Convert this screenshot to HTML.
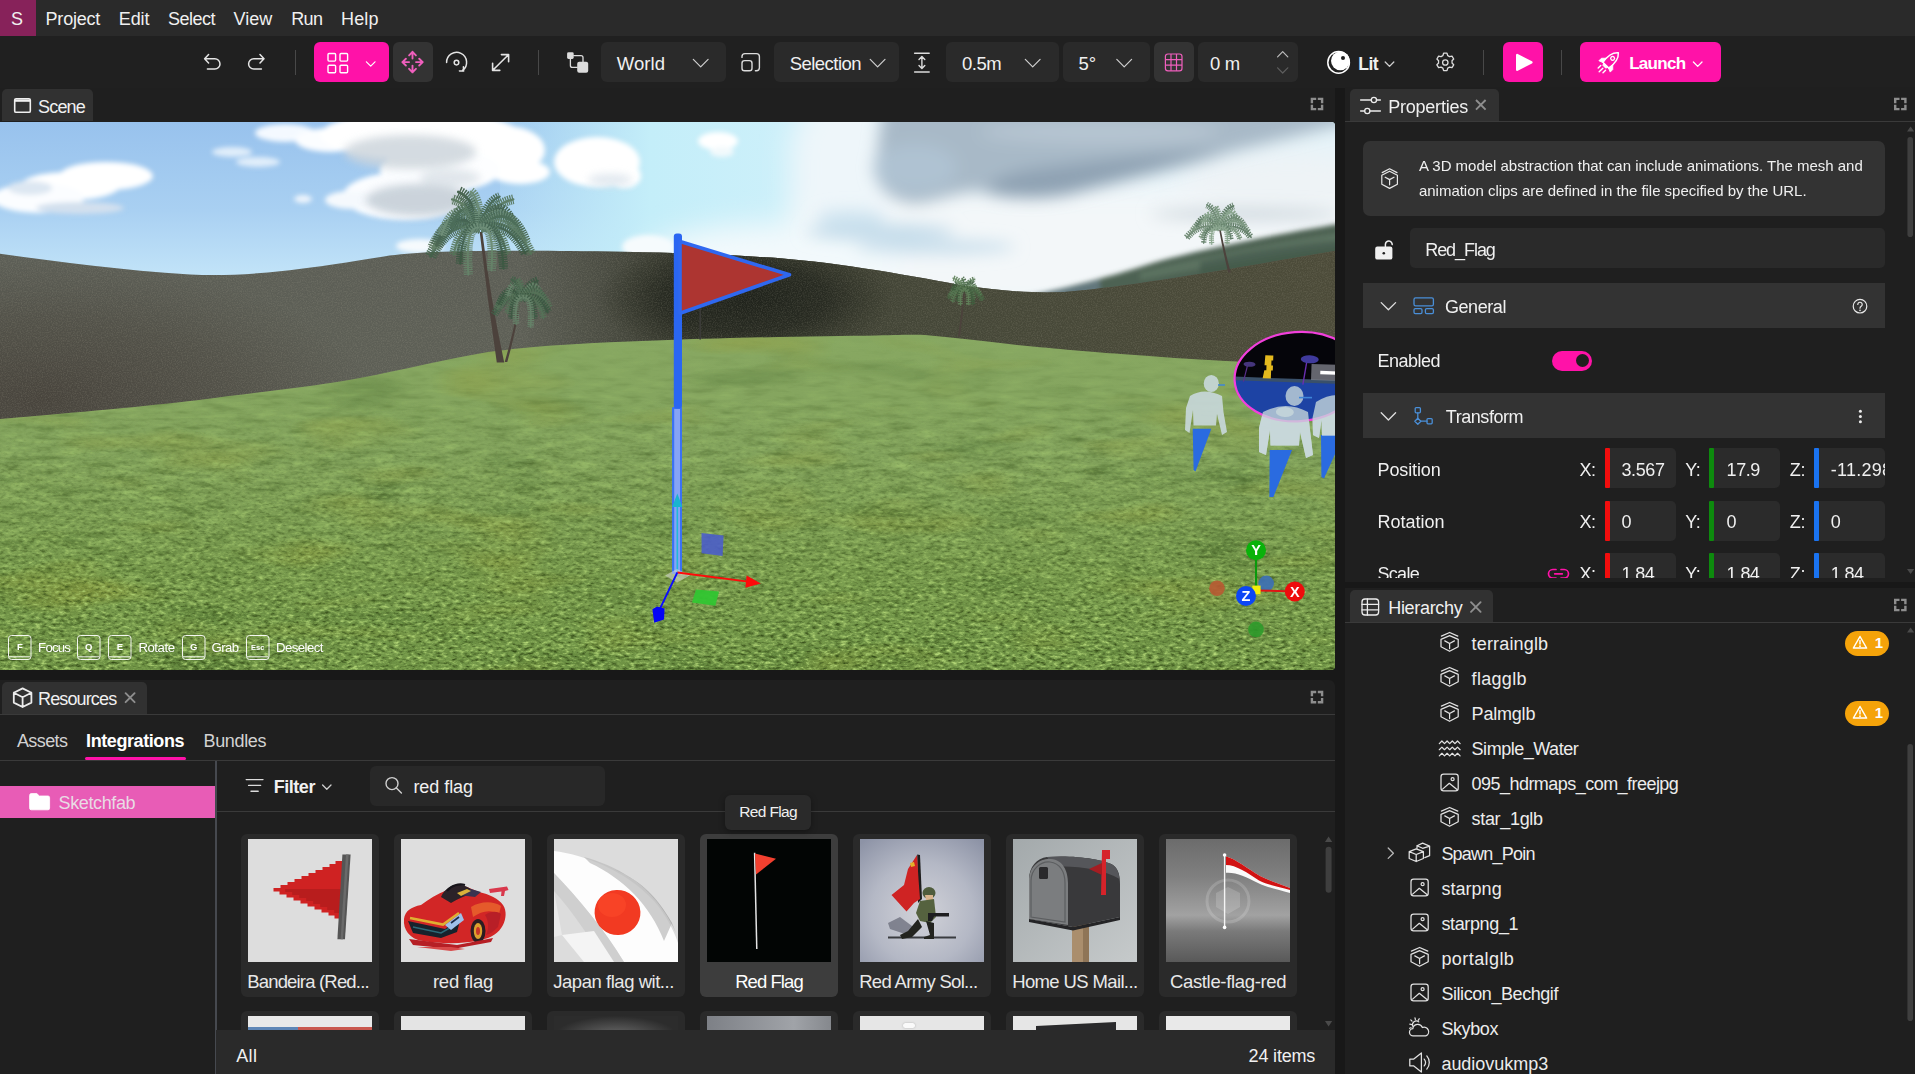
<!DOCTYPE html>
<html lang="en">
<head>
<meta charset="utf-8">
<title>Scene Editor</title>
<style>
*{box-sizing:border-box;margin:0;padding:0}
html,body{width:1915px;height:1074px;overflow:hidden;background:#181818}
body{font-family:"Liberation Sans",sans-serif;font-size:18px;color:#f0f0f0;position:relative}
.abs{position:absolute}
.t{position:absolute;white-space:nowrap;line-height:1;color:#f0f0f0}
svg{position:absolute;overflow:visible}
.ic{fill:none;stroke-linecap:round;stroke-linejoin:round}
.btn{position:absolute;top:42px;height:40px;border-radius:6px;background:#2a2a2a}
.pink{background:#ff12a8}
.sep{position:absolute;top:50px;width:1px;height:25px;background:#484848}
.panel{position:absolute;background:#1f1f1f;overflow:hidden}
.tab{position:absolute;height:33px;background:#313131;border-radius:5px 5px 0 0}
.hline{position:absolute;height:1px;background:#383838}
.vline{position:absolute;width:1px;background:#383838}
.field{position:absolute;height:40px;background:#2b2b2b;border-radius:5px;overflow:hidden}
.hdr{position:absolute;left:1363px;width:522px;height:45px;background:#333333}
.card{position:absolute;width:138px;height:163px;background:#2a2a2a;border-radius:6px;overflow:hidden}
.thumb{position:absolute;left:7px;top:5px;width:124px;height:123px;overflow:hidden}
</style>
</head>
<body>
<!-- ============ MENU BAR ============ -->
<div class="abs" style="left:0;top:0;width:1915px;height:36px;background:#2a2a2a"></div>
<div class="abs" style="left:0;top:0;width:36px;height:36px;background:#87225a"></div>
<div class="t" style="left:11.1px;top:10px;font-size:18px;letter-spacing:-1.00px">S</div>
<div class="t" style="left:45.6px;top:10px;font-size:18px;letter-spacing:-0.23px">Project</div>
<div class="t" style="left:118.7px;top:10px;font-size:18px;letter-spacing:-0.05px">Edit</div>
<div class="t" style="left:168.0px;top:10px;font-size:18px;letter-spacing:-0.52px">Select</div>
<div class="t" style="left:233.6px;top:10px;font-size:18px">View</div>
<div class="t" style="left:291.2px;top:10px;font-size:18px;letter-spacing:-0.57px">Run</div>
<div class="t" style="left:341.1px;top:10px;font-size:18px;letter-spacing:0.10px">Help</div>
<!-- ============ TOOLBAR ============ -->
<div class="abs" style="left:0;top:36px;width:1915px;height:52px;background:#202020"></div>
<!-- undo / redo -->
<svg style="left:0;top:0" width="1915" height="90">
 <g class="ic" stroke="#e4e4e4" stroke-width="1.5">
  <path d="M208.6 54.6 L204.6 58.7 L208.6 62.9 M205 58.7 H214.8 a5.2 5.2 0 0 1 0 10.4 H207.4"/>
  <path d="M260 54.6 L264 58.7 L260 62.9 M263.6 58.7 H253.8 a5.2 5.2 0 0 0 0 10.4 H261.4"/>
 </g>
</svg>
<div class="sep" style="left:295px"></div>
<!-- layout button -->
<div class="btn pink" style="left:314px;width:75px"></div>
<svg style="left:0;top:0" width="1915" height="90">
 <g fill="none" stroke="#fff" stroke-width="1.4" stroke-linejoin="round">
  <rect x="328" y="53.5" width="7.6" height="7.6" rx="1"/><rect x="340" y="53.5" width="7.6" height="7.6" rx="1"/>
  <rect x="328" y="65.2" width="7.6" height="7.6" rx="1"/><rect x="340" y="65.2" width="7.6" height="7.6" rx="1"/>
  <path d="M366.4 61.8 L370.7 66.2 L375 61.8" stroke-width="1.2" stroke-linecap="round"/>
 </g>
</svg>
<!-- move button -->
<div class="btn" style="left:393px;width:40px;background:#333333"></div>
<svg style="left:0;top:0" width="1915" height="90">
 <g fill="none" stroke="#f05fbd" stroke-width="1.9" stroke-linecap="round" stroke-linejoin="round">
  <path d="M412.5 51.8 V58.6 M409.1 55.4 L412.5 51.9 L415.9 55.4"/>
  <path d="M412.5 72.4 V65.6 M409.1 68.8 L412.5 72.3 L415.9 68.8"/>
  <path d="M402.3 62.1 H409.1 M405.9 58.7 L402.4 62.1 L405.9 65.5"/>
  <path d="M422.8 62.1 H416 M419.2 58.7 L422.7 62.1 L419.2 65.5"/>
 </g>
 <!-- rotate -->
 <g class="ic" stroke="#e4e4e4" stroke-width="1.5">
  <path d="M446.6 62.6 A10 10 0 1 1 462.6 70.4"/>
  <path d="M459.4 70.9 L463.6 71.1 M463.4 66.8 L463.6 71.1" stroke-width="1.5"/>
  <path d="M459.2 70.2 L463.2 71.6 L463.6 67" stroke="none"/>
  <circle cx="456.5" cy="62.6" r="2.3"/>
 </g>
 <!-- scale -->
 <g class="ic" stroke="#e4e4e4" stroke-width="1.6">
  <path d="M492.8 70.2 L508.4 54.8 M501.4 54.6 H508.6 V61.8 M492.6 63.2 V70.4 H499.8"/>
 </g>
 <!-- transform space icon -->
 <g fill="#dcdcdc" stroke="none">
  <rect x="567.1" y="52.3" width="6.6" height="6.6" rx="1.4"/>
  <rect x="577.2" y="61.8" width="11" height="11" rx="2"/>
 </g>
 <g class="ic" stroke="#dcdcdc" stroke-width="1.3">
  <path d="M573.7 55.6 H581 a2 2 0 0 1 2 2 V61.8"/>
  <path d="M570.4 58.9 V65.4 a2 2 0 0 0 2 2 H577.2"/>
 </g>
 <!-- pivot icon -->
 <g class="ic" stroke="#dcdcdc" stroke-width="1.4">
  <path d="M742 57.4 V56.6 a3 3 0 0 1 3 -3 H756.4 a3 3 0 0 1 3 3 V67.8 a3 3 0 0 1 -3 3 H755.4"/>
  <rect x="742" y="60.6" width="10" height="10.2" rx="2.6"/>
 </g>
 <!-- height icon -->
 <g class="ic" stroke="#dcdcdc" stroke-width="1.4">
  <path d="M914.6 53.2 H929.2 M914.6 72 H929.2 M921.9 56.8 V68.4 M919 59.6 L921.9 56.6 L924.8 59.6 M919 65.6 L921.9 68.6 L924.8 65.6"/>
 </g>
</svg>
<div class="sep" style="left:538px"></div>
<!-- World dropdown -->
<div class="btn" style="left:601px;width:125px"></div>
<div class="t" style="left:616.7px;top:55px;font-size:18.5px;letter-spacing:0.12px">World</div>
<!-- Selection dropdown -->
<div class="btn" style="left:774px;width:125px"></div>
<div class="t" style="left:789.7px;top:55px;font-size:18.5px;letter-spacing:-0.53px">Selection</div>
<!-- snap dropdowns -->
<div class="btn" style="left:946px;width:113px"></div>
<div class="t" style="left:962.0px;top:55px;font-size:18.5px;letter-spacing:-0.49px">0.5m</div>
<div class="btn" style="left:1063px;width:87px"></div>
<div class="t" style="left:1078.6px;top:55px;font-size:18.5px;letter-spacing:-0.11px">5°</div>
<div class="btn" style="left:1154px;width:40px;background:#333333"></div>
<div class="btn" style="left:1198px;width:100px"></div>
<div class="t" style="left:1209.9px;top:55px;font-size:18.5px;letter-spacing:-0.26px">0 m</div>
<svg style="left:0;top:0" width="1915" height="90">
 <g fill="none" stroke="#f05fbd" stroke-width="1.2" stroke-linejoin="round">
  <rect x="1165.4" y="54" width="16.6" height="16.8" rx="2.6"/>
  <path d="M1171 54 V70.8 M1176.5 54 V70.8 M1165.4 59.6 H1182 M1165.4 65.2 H1182"/>
 </g>
 <g class="ic" stroke="#e4e4e4" stroke-width="1.2">
  <path d="M1277.6 56.8 L1282.7 51.6 L1287.8 56.8" stroke="#bdbdbd"/>
  <path d="M1277.6 67.8 L1282.7 73 L1287.8 67.8" stroke="#5e5e5e"/>
 </g>
 <!-- Lit icon -->
 <circle cx="1338.6" cy="62.4" r="10.8" fill="none" stroke="#fff" stroke-width="1.5"/>
 <circle cx="1340.4" cy="60.8" r="9.4" fill="#fff"/>
 <circle cx="1343" cy="58" r="2" fill="#1f1f1f"/>
 <path class="ic" stroke="#cfcfcf" stroke-width="1.3" d="M1385.2 62 L1389.5 66.4 L1393.8 62"/>
 <!-- gear -->
 <g class="ic" stroke="#dcdcdc" stroke-width="1.3">
  <circle cx="1445.3" cy="62.5" r="2.7"/>
  <path id="gear" d="M1443.6 53.2 h3.4 l0.7 2.4 a6.6 6.6 0 0 1 1.9 1.1 l2.4 -0.6 l1.7 2.9 l-1.7 1.8 a6.6 6.6 0 0 1 0 2.2 l1.7 1.8 l-1.7 2.9 l-2.4 -0.6 a6.6 6.6 0 0 1 -1.9 1.1 l-0.7 2.4 h-3.4 l-0.7 -2.4 a6.6 6.6 0 0 1 -1.9 -1.1 l-2.4 0.6 l-1.7 -2.9 l1.7 -1.8 a6.6 6.6 0 0 1 0 -2.2 l-1.7 -1.8 l1.7 -2.9 l2.4 0.6 a6.6 6.6 0 0 1 1.9 -1.1 z"/>
 </g>
</svg>
<div class="t" style="left:1358.2px;top:56px;font-size:17.5px;letter-spacing:-0.47px;font-weight:700">Lit</div>
<div class="sep" style="left:1483px"></div>
<div class="btn pink" style="left:1503px;width:40px"></div>
<svg style="left:0;top:0" width="1915" height="90">
 <path d="M1517.2 55 V69.8 L1531.4 62.4 Z" fill="#fff" stroke="#fff" stroke-width="2.4" stroke-linejoin="round"/>
</svg>
<div class="sep" style="left:1561px"></div>
<div class="btn pink" style="left:1580px;width:141px"></div>
<div class="t" style="left:1629.2px;top:55px;font-size:17px;letter-spacing:-0.72px;font-weight:700;color:#fff">Launch</div>
<svg style="left:0;top:0" width="1915" height="90">
 <path class="ic" stroke="#fff" stroke-width="1.3" d="M1693.4 62 L1697.7 66.4 L1702 62"/>
 <!-- rocket -->
 <g transform="translate(1609.5 61.5) rotate(45)">
  <path d="M0 -12.5 C4.6 -8.5 5.4 -2 4.2 5.2 H-4.2 C-5.4 -2 -4.6 -8.5 0 -12.5 Z" fill="none" stroke="#fff" stroke-width="1.5" stroke-linejoin="round"/>
  <circle cx="0" cy="-4.4" r="1.9" fill="none" stroke="#fff" stroke-width="1.3"/>
  <path d="M-4.6 0 L-8 3.4 V7 L-4 5.4 Z M4.6 0 L8 3.4 V7 L4 5.4 Z M-3 5.2 H3 L2 7.4 H-2 Z" fill="#fff" stroke="#fff" stroke-width="0.8" stroke-linejoin="round"/>
  <path d="M0 9.4 V14.6 M-3.4 9 V12.6 M3.4 9 V12.6" stroke="#fff" stroke-width="1.4" stroke-linecap="round"/>
 </g>
</svg>
<svg style="left:0;top:0" width="1915" height="90"><g class="ic" stroke="#cfcfcf" stroke-width="1.2">
 <path d="M693.3 59.4 L700.7 66.8 L708.1 59.4"/>
 <path d="M870.2 59.4 L877.6 66.8 L885 59.4"/>
 <path d="M1025.3 59.4 L1032.7 66.8 L1040.1 59.4"/>
 <path d="M1116.8 59.4 L1124.2 66.8 L1131.6 59.4"/>
</g></svg>
<!-- ============ SCENE PANEL ============ -->
<div class="panel" style="left:0;top:88px;width:1335px;height:582px;border-radius:0 0 6px 0"></div>
<div class="tab" style="left:2px;top:89px;width:91px;height:32px"></div>
<svg style="left:0;top:0" width="1335" height="125">
 <g class="ic" stroke="#f0f0f0" stroke-width="1.6"><rect x="14.7" y="98.7" width="15.6" height="13.6" rx="1.4"/><path d="M14.7 100.6 H30.3" stroke-width="2.4" stroke-linecap="butt"/></g>
 <path d="M1311.9 103.2 V98.9 H1316.2 M1317.8 98.9 H1322.1 V103.2 M1322.1 104.8 V109.1 H1317.8 M1316.2 109.1 H1311.9 V104.8" fill="none" stroke="#8e8e8e" stroke-width="2.4"/>
</svg>
<div class="t" style="left:38.0px;top:98px;font-size:18px;letter-spacing:-0.81px">Scene</div>
<div class="abs" id="viewport" style="left:0;top:122px;width:1335px;height:548px;overflow:hidden;border-radius:0 4px 4px 0;background:#6a9648">
<svg style="left:0;top:0" width="1335" height="548" viewBox="0 122 1335 548">
 <defs>
  <linearGradient id="sky" x1="0" y1="122" x2="0" y2="300" gradientUnits="userSpaceOnUse">
   <stop offset="0" stop-color="#98c2ed"/><stop offset="0.5" stop-color="#a9d0f2"/><stop offset="0.85" stop-color="#c1e3f8"/><stop offset="1" stop-color="#c6e6f9"/>
  </linearGradient>
  <linearGradient id="skyR" x1="470" y1="0" x2="900" y2="0" gradientUnits="userSpaceOnUse">
   <stop offset="0" stop-color="#c4eef9" stop-opacity="0"/><stop offset="0.42" stop-color="#c4eef9" stop-opacity="1"/><stop offset="0.75" stop-color="#cdf0fa" stop-opacity="1"/><stop offset="1" stop-color="#e4f3f9" stop-opacity="1"/>
  </linearGradient>
  <linearGradient id="grass" x1="0" y1="335" x2="0" y2="670" gradientUnits="userSpaceOnUse">
   <stop offset="0" stop-color="#88a862"/><stop offset="0.35" stop-color="#82a25c"/><stop offset="0.7" stop-color="#76984c"/><stop offset="1" stop-color="#709446"/>
  </linearGradient>
  <linearGradient id="hillL" x1="0" y1="250" x2="0" y2="420" gradientUnits="userSpaceOnUse">
   <stop offset="0" stop-color="#5c5e56"/><stop offset="0.5" stop-color="#5d5f56"/><stop offset="1" stop-color="#5e5f56"/>
  </linearGradient>
  <linearGradient id="hillR" x1="520" y1="0" x2="1335" y2="0" gradientUnits="userSpaceOnUse">
   <stop offset="0" stop-color="#3a3c30" stop-opacity="0"/><stop offset="0.2" stop-color="#383a2f" stop-opacity="1"/><stop offset="0.5" stop-color="#454738"/><stop offset="1" stop-color="#4c4b39"/>
  </linearGradient>
  <radialGradient id="hdk" cx="40" cy="400" r="330" gradientUnits="userSpaceOnUse" gradientTransform="translate(40 400) scale(1 .42) translate(-40 -400)"><stop offset="0" stop-color="#443f38" stop-opacity=".85"/><stop offset="0.6" stop-color="#47433b" stop-opacity=".45"/><stop offset="1" stop-color="#4a463e" stop-opacity="0"/></radialGradient>
  <radialGradient id="shadow" cx="745" cy="298" r="150" gradientUnits="userSpaceOnUse" gradientTransform="translate(745 298) scale(1 .4) translate(-745 -298)">
   <stop offset="0" stop-color="#1f221b" stop-opacity="1"/><stop offset="0.55" stop-color="#23261e" stop-opacity=".8"/><stop offset="1" stop-color="#2a2d22" stop-opacity="0"/>
  </radialGradient>
  <filter id="b2" x="-20%" y="-20%" width="140%" height="140%"><feGaussianBlur stdDeviation="2"/></filter>
  <filter id="b3" x="-20%" y="-20%" width="140%" height="140%"><feGaussianBlur stdDeviation="2.6"/></filter>
  <filter id="b4" x="-20%" y="-20%" width="140%" height="140%"><feGaussianBlur stdDeviation="4"/></filter>
  <filter id="b8" x="-20%" y="-20%" width="140%" height="140%"><feGaussianBlur stdDeviation="8"/></filter>
  <filter id="b14" x="-30%" y="-30%" width="160%" height="160%"><feGaussianBlur stdDeviation="14"/></filter>
  <filter id="b05" x="-20%" y="-20%" width="140%" height="140%"><feGaussianBlur stdDeviation="0.75"/></filter>
  <filter id="b1" x="-20%" y="-20%" width="140%" height="140%"><feGaussianBlur stdDeviation="0.8"/></filter>
  <filter id="gtex" x="0" y="0" width="100%" height="100%" color-interpolation-filters="sRGB">
   <feTurbulence type="fractalNoise" baseFrequency="0.17 0.34" numOctaves="3" seed="7" result="n"/>
   <feColorMatrix in="n" type="matrix" values="0 0 0 0 0.20  0 0 0 0 0.29  0 0 0 0 0.09  -3.0 0 0 0 1.40" result="d"/>
   <feColorMatrix in="n" type="matrix" values="0 0 0 0 0.72  0 0 0 0 0.86  0 0 0 0 0.48  3.0 0 0 0 -1.58" result="l"/>
   <feMerge><feMergeNode in="d"/><feMergeNode in="l"/></feMerge>
  </filter>
  <filter id="gmid" x="0" y="0" width="100%" height="100%" color-interpolation-filters="sRGB">
   <feTurbulence type="fractalNoise" baseFrequency="0.035 0.16" numOctaves="3" seed="21" result="n"/>
   <feColorMatrix in="n" type="matrix" values="0 0 0 0 0.24  0 0 0 0 0.35  0 0 0 0 0.13  -2.6 0 0 0 1.25" result="d"/>
   <feColorMatrix in="n" type="matrix" values="0 0 0 0 0.70  0 0 0 0 0.85  0 0 0 0 0.48  2.4 0 0 0 -1.28" result="l"/>
   <feMerge><feMergeNode in="d"/><feMergeNode in="l"/></feMerge>
  </filter>
  <filter id="gblot" x="0" y="0" width="100%" height="100%" color-interpolation-filters="sRGB">
   <feTurbulence type="fractalNoise" baseFrequency="0.007 0.028" numOctaves="2" seed="4" result="n"/>
   <feColorMatrix in="n" type="matrix" values="0 0 0 0 0.62  0 0 0 0 0.60  0 0 0 0 0.18  0 3.0 0 0 -1.62" result="y"/>
   <feColorMatrix in="n" type="matrix" values="0 0 0 0 0.16  0 0 0 0 0.30  0 0 0 0 0.10  0 0 -3.0 0 1.25" result="d"/>
   <feMerge><feMergeNode in="d"/><feMergeNode in="y"/></feMerge>
  </filter>
  <linearGradient id="fadeM" x1="0" y1="335" x2="0" y2="670" gradientUnits="userSpaceOnUse"><stop offset="0" stop-color="#fff" stop-opacity=".05"/><stop offset="0.12" stop-color="#fff" stop-opacity=".2"/><stop offset="0.4" stop-color="#fff" stop-opacity=".7"/><stop offset="0.7" stop-color="#fff" stop-opacity=".5"/><stop offset="1" stop-color="#fff" stop-opacity=".2"/></linearGradient>
  <mask id="mM"><rect x="0" y="122" width="1335" height="548" fill="url(#fadeM)"/></mask>
  <filter id="hn" x="0" y="0" width="100%" height="100%">
   <feTurbulence type="fractalNoise" baseFrequency="0.8" numOctaves="2" seed="11" result="n"/>
   <feColorMatrix in="n" type="matrix" values="0 0 0 0 0.46  0 0 0 0 0.44  0 0 0 0 0.34  0 0 1.4 0 -0.55" result="c"/><feComposite in="c" in2="SourceAlpha" operator="in"/>
  </filter>
  <linearGradient id="fadeB" x1="0" y1="400" x2="0" y2="660" gradientUnits="userSpaceOnUse"><stop offset="0" stop-color="#fff" stop-opacity="0"/><stop offset="0.45" stop-color="#fff" stop-opacity=".45"/><stop offset="1" stop-color="#fff" stop-opacity="1"/></linearGradient>
  <mask id="mB"><rect x="0" y="122" width="1335" height="548" fill="url(#fadeB)"/></mask>
 </defs>
 <!-- sky -->
 <rect x="0" y="122" width="1335" height="240" fill="url(#sky)"/>
 <rect x="500" y="122" width="835" height="240" fill="url(#skyR)"/>
 <!-- right-side overcast -->
 <g filter="url(#b14)">
  <rect x="790" y="185" width="620" height="130" fill="#f3f7f9"/>
  <ellipse cx="770" cy="262" rx="130" ry="38" fill="#f2f9fc"/>
  <ellipse cx="845" cy="160" rx="55" ry="70" fill="#eef6fa"/>
  <ellipse cx="1290" cy="180" rx="110" ry="30" fill="#eef3f6"/>
 </g>
 <g filter="url(#b8)">
  <path d="M885 100 H1360 V120 C1320 130 1279 140 1227 153 C1174 168 1096 187 1070 194 C1040 200 1005 199 985 192 C960 188 935 204 913 203 C890 200 870 185 876 160 C880 135 880 120 885 100 Z" fill="#a8b9c7"/>
  <path d="M985 192 C1005 199 1040 200 1070 194 C1096 187 1174 168 1227 153 C1180 150 1100 160 1040 168 C1010 172 990 180 985 192 Z" fill="#8fa2b3"/>
  <ellipse cx="915" cy="168" rx="42" ry="24" fill="#afc2d2"/>
  <ellipse cx="1100" cy="132" rx="120" ry="12" fill="#b6c5d1"/>
  <ellipse cx="1245" cy="214" rx="95" ry="6" fill="#cfd8de"/>
  <ellipse cx="880" cy="232" rx="75" ry="8" fill="#c4dcea"/>
  <ellipse cx="935" cy="247" rx="80" ry="7" fill="#c9dfec"/>
  <ellipse cx="850" cy="218" rx="35" ry="8" fill="#cfe4f0"/>
 </g>
 <!-- left clouds -->
 <g filter="url(#b3)">
  <ellipse cx="106" cy="176" rx="47" ry="14" fill="#fff"/>
  <ellipse cx="70" cy="186" rx="50" ry="14" fill="#fff"/>
  <ellipse cx="38" cy="198" rx="46" ry="15" fill="#fbfdff"/>
  <ellipse cx="80" cy="208" rx="44" ry="6" fill="#d3e0ee"/>
  <ellipse cx="30" cy="188" rx="22" ry="7" fill="#dde7f2"/>
  <ellipse cx="232" cy="152" rx="20" ry="5" fill="#e8f2fc" opacity=".9"/>
  <ellipse cx="258" cy="162" rx="22" ry="5" fill="#e8f2fc" opacity=".9"/>
  <ellipse cx="285" cy="133" rx="30" ry="9" fill="#f4f9ff"/>
  <ellipse cx="330" cy="140" rx="35" ry="12" fill="#fbfdff"/>
  <ellipse cx="420" cy="135" rx="100" ry="24" fill="#fff"/>
  <ellipse cx="505" cy="150" rx="40" ry="24" fill="#fff"/>
  <ellipse cx="520" cy="172" rx="30" ry="12" fill="#fff"/>
  <ellipse cx="440" cy="170" rx="60" ry="22" fill="#fdfeff"/>
  <ellipse cx="405" cy="196" rx="62" ry="24" fill="#fbfdff"/>
  <ellipse cx="350" cy="200" rx="25" ry="9" fill="#f5f9fd"/>
  <ellipse cx="597" cy="162" rx="43" ry="25" fill="#fff"/>
  <ellipse cx="625" cy="176" rx="16" ry="12" fill="#fff"/>
  <ellipse cx="420" cy="246" rx="24" ry="7" fill="#f6fafd"/>
  <ellipse cx="718" cy="141" rx="20" ry="9" fill="#fff"/>
  <ellipse cx="722" cy="152" rx="12" ry="5" fill="#f2f9fc"/>
  <ellipse cx="303" cy="199" rx="9" ry="4" fill="#eef5fc"/>
  <ellipse cx="648" cy="247" rx="26" ry="12" fill="#f6fbfd"/>
 </g>
 <g filter="url(#b4)" opacity=".85">
  <ellipse cx="410" cy="152" rx="66" ry="17" fill="#cdd5dc"/>
  <ellipse cx="418" cy="200" rx="52" ry="16" fill="#c2ccd5"/>
  <ellipse cx="450" cy="178" rx="30" ry="9" fill="#dbe2e8"/>
  <ellipse cx="610" cy="180" rx="22" ry="6" fill="#dbe4ec"/>
 </g>
 <!--CLOUDS-->
 <!-- distant forest -->
 <g filter="url(#b3)">
  <path d="M1015 298 C1050 292 1100 280 1156 262 C1200 250 1260 237 1345 223 V300 H1015 Z" fill="#4d6252"/>
  <path d="M1140 272 C1200 258 1260 245 1345 232 V246 C1280 254 1220 264 1140 280 Z" fill="#687d6b" opacity=".6"/>
  <path d="M1015 298 C1040 293 1070 288 1100 280 L1100 300 H1015 Z" fill="#6b8090" opacity=".7"/>
  <path d="M1200 262 C1250 250 1300 244 1345 240 V262 C1300 264 1250 268 1200 276 Z" fill="#40564a" opacity=".6"/>
 </g>
 <!-- hills -->
 <path d="M-5 253 C60 262 120 270 190 274.5 C250 277 300 270 384 256.5 C420 251 470 250.5 560 251 C620 251.3 700 253 760 257 C830 261 900 274 960 285 C1000 291 1040 294 1070 291.5 C1140 285 1240 267 1340 250 V430 H-5 Z" fill="url(#hillL)"/>
 <path d="M-5 253 C60 262 120 270 190 274.5 C250 277 300 270 384 256.5 C420 251 470 250.5 560 251 C620 251.3 700 253 760 257 C830 261 900 274 960 285 C1000 291 1040 294 1070 291.5 C1140 285 1240 267 1340 250 V430 H-5 Z" fill="url(#hillR)"/>
 <clipPath id="hc"><path d="M-5 253 C60 262 120 270 190 274.5 C250 277 300 270 384 256.5 C420 251 470 250.5 560 251 C620 251.3 700 253 760 257 C830 261 900 274 960 285 C1000 291 1040 294 1070 291.5 C1140 285 1240 267 1340 250 V430 H-5 Z"/></clipPath><rect x="560" y="236" width="380" height="124" fill="url(#shadow)" clip-path="url(#hc)"/>
 <rect x="0" y="250" width="420" height="180" fill="url(#hdk)" clip-path="url(#hc)"/>
 <path d="M-5 253 C60 262 120 270 190 274.5 C250 277 300 270 384 256.5 C420 251 470 250.5 560 251 C620 251.3 700 253 760 257 C830 261 900 274 960 285 C1000 291 1040 294 1070 291.5 C1140 285 1240 267 1340 250 V430 H-5 Z" filter="url(#hn)" opacity=".28"/>
 <!--HILLS-->
 <!-- grass -->
 <clipPath id="gc"><path d="M-5 419.5 C80 412 140 407 199 400 C260 392 300 388 349 380 C400 371 440 360 488 352 C550 344 610 342 668 340 C760 337 830 336 877 335.5 C900 335 915 334.6 925 335 C960 338 990 342 1017 345 C1060 349 1090 352 1121 354 C1160 357 1190 359 1226 361 L1340 366 V675 H-5 Z"/></clipPath>
 <path id="gr" d="M-5 419.5 C80 412 140 407 199 400 C260 392 300 388 349 380 C400 371 440 360 488 352 C550 344 610 342 668 340 C760 337 830 336 877 335.5 C900 335 915 334.6 925 335 C960 338 990 342 1017 345 C1060 349 1090 352 1121 354 C1160 357 1190 359 1226 361 L1340 366 V675 H-5 Z" fill="url(#grass)"/>
 <g clip-path="url(#gc)">
  <rect x="0" y="330" width="1335" height="340" filter="url(#gblot)" opacity=".3"/>
  <g mask="url(#mM)"><rect x="0" y="330" width="1335" height="340" filter="url(#gmid)" opacity=".75"/></g>
  <g mask="url(#mB)"><rect x="0" y="400" width="1335" height="270" filter="url(#gtex)"/></g>
 </g>
 <!--GRASS-->
 <!-- palms -->
 <g><path d="M479.7 232.0 Q487.1 297.2 496.8 362.5 H504.2 Q490.2 297.2 482.3 232.0 Z" fill="#4c423c"/>
  <g fill="none" stroke-linecap="round" opacity="0.9" filter="url(#b05)"><path d="M480.5 228.0 Q449.6 219.0 430.6 256.4" stroke="#42624a" stroke-width="12.0" stroke-dasharray="1.3 0.9" stroke-linecap="butt"/><path d="M480.5 228.0 Q449.6 219.0 430.6 256.4" stroke="#42624a" stroke-width="2.8"/><path d="M480.5 228.0 Q451.1 207.6 433.1 248.6" stroke="#557459" stroke-width="12.5" stroke-dasharray="1.3 0.9" stroke-linecap="butt"/><path d="M480.5 228.0 Q451.1 207.6 433.1 248.6" stroke="#557459" stroke-width="3.0"/><path d="M480.5 228.0 Q453.3 205.7 436.6 245.3" stroke="#3a5942" stroke-width="12.5" stroke-dasharray="1.3 0.9" stroke-linecap="butt"/><path d="M480.5 228.0 Q453.3 205.7 436.6 245.3" stroke="#3a5942" stroke-width="3.0"/><path d="M480.5 228.0 Q456.4 192.0 441.6 235.0" stroke="#66856b" stroke-width="9.4" stroke-dasharray="1.3 0.9" stroke-linecap="butt"/><path d="M480.5 228.0 Q456.4 192.0 441.6 235.0" stroke="#66856b" stroke-width="2.2"/><path d="M480.5 228.0 Q463.0 190.8 452.2 227.6" stroke="#42624a" stroke-width="11.0" stroke-dasharray="1.3 0.9" stroke-linecap="butt"/><path d="M480.5 228.0 Q463.0 190.8 452.2 227.6" stroke="#42624a" stroke-width="2.6"/><path d="M480.5 228.0 Q470.8 203.9 452.1 199.3" stroke="#557459" stroke-width="9.8" stroke-dasharray="1.3 0.9" stroke-linecap="butt"/><path d="M480.5 228.0 Q470.8 203.9 452.1 199.3" stroke="#557459" stroke-width="2.3"/><path d="M480.5 228.0 Q473.5 197.7 458.3 192.0" stroke="#3a5942" stroke-width="11.9" stroke-dasharray="1.3 0.9" stroke-linecap="butt"/><path d="M480.5 228.0 Q473.5 197.7 458.3 192.0" stroke="#3a5942" stroke-width="2.8"/><path d="M480.5 228.0 Q479.0 197.3 470.9 191.6" stroke="#66856b" stroke-width="9.5" stroke-dasharray="1.3 0.9" stroke-linecap="butt"/><path d="M480.5 228.0 Q479.0 197.3 470.9 191.6" stroke="#66856b" stroke-width="2.3"/><path d="M480.5 228.0 Q486.1 201.6 499.7 196.7" stroke="#42624a" stroke-width="9.0" stroke-dasharray="1.3 0.9" stroke-linecap="butt"/><path d="M480.5 228.0 Q486.1 201.6 499.7 196.7" stroke="#42624a" stroke-width="2.1"/><path d="M480.5 228.0 Q492.1 203.8 513.3 199.3" stroke="#557459" stroke-width="9.8" stroke-dasharray="1.3 0.9" stroke-linecap="butt"/><path d="M480.5 228.0 Q492.1 203.8 513.3 199.3" stroke="#557459" stroke-width="2.3"/><path d="M480.5 228.0 Q501.8 188.4 514.9 230.4" stroke="#3a5942" stroke-width="10.1" stroke-dasharray="1.3 0.9" stroke-linecap="butt"/><path d="M480.5 228.0 Q501.8 188.4 514.9 230.4" stroke="#3a5942" stroke-width="2.4"/><path d="M480.5 228.0 Q504.9 197.4 519.9 238.1" stroke="#66856b" stroke-width="11.5" stroke-dasharray="1.3 0.9" stroke-linecap="butt"/><path d="M480.5 228.0 Q504.9 197.4 519.9 238.1" stroke="#66856b" stroke-width="2.7"/><path d="M480.5 228.0 Q508.4 198.9 525.5 242.5" stroke="#42624a" stroke-width="11.6" stroke-dasharray="1.3 0.9" stroke-linecap="butt"/><path d="M480.5 228.0 Q508.4 198.9 525.5 242.5" stroke="#42624a" stroke-width="2.7"/><path d="M480.5 228.0 Q511.8 213.3 531.0 253.7" stroke="#557459" stroke-width="10.1" stroke-dasharray="1.3 0.9" stroke-linecap="butt"/><path d="M480.5 228.0 Q511.8 213.3 531.0 253.7" stroke="#557459" stroke-width="2.4"/><path d="M480.5 228.0 Q508.3 219.8 525.4 253.5" stroke="#3a5942" stroke-width="9.5" stroke-dasharray="1.3 0.9" stroke-linecap="butt"/><path d="M480.5 228.0 Q508.3 219.8 525.4 253.5" stroke="#3a5942" stroke-width="2.3"/><path d="M480.5 228.0 Q459.2 223.7 453.6 254.9" stroke="#557459" stroke-width="9.1" stroke-dasharray="1.3 0.9" stroke-linecap="butt"/><path d="M480.5 228.0 Q459.2 223.7 453.6 254.9" stroke="#557459" stroke-width="2.1"/><path d="M480.5 228.0 Q461.9 223.3 460.3 263.7" stroke="#3a5942" stroke-width="9.1" stroke-dasharray="1.3 0.9" stroke-linecap="butt"/><path d="M480.5 228.0 Q461.9 223.3 460.3 263.7" stroke="#3a5942" stroke-width="2.1"/><path d="M480.5 228.0 Q465.0 222.8 468.4 274.6" stroke="#66856b" stroke-width="9.1" stroke-dasharray="1.3 0.9" stroke-linecap="butt"/><path d="M480.5 228.0 Q465.0 222.8 468.4 274.6" stroke="#66856b" stroke-width="2.1"/><path d="M480.5 228.0 Q501.2 223.9 506.8 254.3" stroke="#557459" stroke-width="9.1" stroke-dasharray="1.3 0.9" stroke-linecap="butt"/><path d="M480.5 228.0 Q501.2 223.9 506.8 254.3" stroke="#557459" stroke-width="2.1"/><path d="M480.5 228.0 Q501.7 222.7 503.5 268.7" stroke="#3a5942" stroke-width="9.1" stroke-dasharray="1.3 0.9" stroke-linecap="butt"/><path d="M480.5 228.0 Q501.7 222.7 503.5 268.7" stroke="#3a5942" stroke-width="2.1"/><path d="M480.5 228.0 Q494.7 223.3 491.5 270.5" stroke="#66856b" stroke-width="9.1" stroke-dasharray="1.3 0.9" stroke-linecap="butt"/><path d="M480.5 228.0 Q494.7 223.3 491.5 270.5" stroke="#66856b" stroke-width="2.1"/></g></g>
 <g><path d="M519.2 300.0 Q513.9 331.0 504.7 362.0 H507.3 Q516.0 331.0 520.8 300.0 Z" fill="#4c423c"/>
  <g fill="none" stroke-linecap="round" opacity="0.9" filter="url(#b05)"><path d="M523.0 298.0 Q505.3 293.1 494.4 314.4" stroke="#42624a" stroke-width="7.7" stroke-dasharray="1.3 0.9" stroke-linecap="butt"/><path d="M523.0 298.0 Q505.3 293.1 494.4 314.4" stroke="#42624a" stroke-width="1.8"/><path d="M523.0 298.0 Q507.3 286.6 497.6 308.8" stroke="#557459" stroke-width="8.3" stroke-dasharray="1.3 0.9" stroke-linecap="butt"/><path d="M523.0 298.0 Q507.3 286.6 497.6 308.8" stroke="#557459" stroke-width="2.0"/><path d="M523.0 298.0 Q508.0 279.7 498.7 304.5" stroke="#3a5942" stroke-width="6.5" stroke-dasharray="1.3 0.9" stroke-linecap="butt"/><path d="M523.0 298.0 Q508.0 279.7 498.7 304.5" stroke="#3a5942" stroke-width="1.5"/><path d="M523.0 298.0 Q513.5 273.1 507.7 295.5" stroke="#66856b" stroke-width="6.5" stroke-dasharray="1.3 0.9" stroke-linecap="butt"/><path d="M523.0 298.0 Q513.5 273.1 507.7 295.5" stroke="#66856b" stroke-width="1.5"/><path d="M523.0 298.0 Q519.4 282.4 511.3 279.5" stroke="#42624a" stroke-width="8.0" stroke-dasharray="1.3 0.9" stroke-linecap="butt"/><path d="M523.0 298.0 Q519.4 282.4 511.3 279.5" stroke="#42624a" stroke-width="1.9"/><path d="M523.0 298.0 Q522.0 282.9 517.1 280.1" stroke="#557459" stroke-width="6.9" stroke-dasharray="1.3 0.9" stroke-linecap="butt"/><path d="M523.0 298.0 Q522.0 282.9 517.1 280.1" stroke="#557459" stroke-width="1.6"/><path d="M523.0 298.0 Q528.0 283.5 537.9 280.8" stroke="#3a5942" stroke-width="8.5" stroke-dasharray="1.3 0.9" stroke-linecap="butt"/><path d="M523.0 298.0 Q528.0 283.5 537.9 280.8" stroke="#3a5942" stroke-width="2.0"/><path d="M523.0 298.0 Q534.2 274.2 541.2 297.8" stroke="#66856b" stroke-width="7.3" stroke-dasharray="1.3 0.9" stroke-linecap="butt"/><path d="M523.0 298.0 Q534.2 274.2 541.2 297.8" stroke="#66856b" stroke-width="1.7"/><path d="M523.0 298.0 Q536.0 279.3 543.9 302.1" stroke="#42624a" stroke-width="8.5" stroke-dasharray="1.3 0.9" stroke-linecap="butt"/><path d="M523.0 298.0 Q536.0 279.3 543.9 302.1" stroke="#42624a" stroke-width="2.0"/><path d="M523.0 298.0 Q538.9 283.9 548.7 307.6" stroke="#557459" stroke-width="8.6" stroke-dasharray="1.3 0.9" stroke-linecap="butt"/><path d="M523.0 298.0 Q538.9 283.9 548.7 307.6" stroke="#557459" stroke-width="2.0"/><path d="M523.0 298.0 Q538.3 294.3 547.7 312.5" stroke="#3a5942" stroke-width="9.0" stroke-dasharray="1.3 0.9" stroke-linecap="butt"/><path d="M523.0 298.0 Q538.3 294.3 547.7 312.5" stroke="#3a5942" stroke-width="2.1"/><path d="M523.0 298.0 Q510.9 295.6 507.6 313.4" stroke="#557459" stroke-width="6.5" stroke-dasharray="1.3 0.9" stroke-linecap="butt"/><path d="M523.0 298.0 Q510.9 295.6 507.6 313.4" stroke="#557459" stroke-width="1.5"/><path d="M523.0 298.0 Q512.3 295.3 511.4 318.5" stroke="#3a5942" stroke-width="6.5" stroke-dasharray="1.3 0.9" stroke-linecap="butt"/><path d="M523.0 298.0 Q512.3 295.3 511.4 318.5" stroke="#3a5942" stroke-width="1.5"/><path d="M523.0 298.0 Q514.2 295.1 516.2 324.4" stroke="#66856b" stroke-width="6.5" stroke-dasharray="1.3 0.9" stroke-linecap="butt"/><path d="M523.0 298.0 Q514.2 295.1 516.2 324.4" stroke="#66856b" stroke-width="1.5"/><path d="M523.0 298.0 Q539.2 294.8 543.5 318.5" stroke="#557459" stroke-width="6.5" stroke-dasharray="1.3 0.9" stroke-linecap="butt"/><path d="M523.0 298.0 Q539.2 294.8 543.5 318.5" stroke="#557459" stroke-width="1.5"/><path d="M523.0 298.0 Q533.7 295.3 534.6 318.5" stroke="#3a5942" stroke-width="6.5" stroke-dasharray="1.3 0.9" stroke-linecap="butt"/><path d="M523.0 298.0 Q533.7 295.3 534.6 318.5" stroke="#3a5942" stroke-width="1.5"/><path d="M523.0 298.0 Q532.7 294.8 530.6 327.2" stroke="#66856b" stroke-width="6.5" stroke-dasharray="1.3 0.9" stroke-linecap="butt"/><path d="M523.0 298.0 Q532.7 294.8 530.6 327.2" stroke="#66856b" stroke-width="1.5"/></g></g>
 <g><path d="M963.4 292.0 Q961.5 314.2 958.0 336.5 H960.0 Q963.2 314.2 964.6 292.0 Z" fill="#4c423c"/>
  <g fill="none" stroke-linecap="round" opacity="0.9" filter="url(#b05)"><path d="M964.5 290.0 Q954.6 286.3 948.5 298.6" stroke="#4a6b47" stroke-width="5.2" stroke-dasharray="1.3 0.9" stroke-linecap="butt"/><path d="M964.5 290.0 Q954.6 286.3 948.5 298.6" stroke="#4a6b47" stroke-width="1.2"/><path d="M964.5 290.0 Q955.8 282.5 950.4 295.4" stroke="#587a54" stroke-width="4.9" stroke-dasharray="1.3 0.9" stroke-linecap="butt"/><path d="M964.5 290.0 Q955.8 282.5 950.4 295.4" stroke="#587a54" stroke-width="1.2"/><path d="M964.5 290.0 Q957.2 275.6 952.7 290.4" stroke="#40603f" stroke-width="4.9" stroke-dasharray="1.3 0.9" stroke-linecap="butt"/><path d="M964.5 290.0 Q957.2 275.6 952.7 290.4" stroke="#40603f" stroke-width="1.2"/><path d="M964.5 290.0 Q960.4 280.0 952.9 278.1" stroke="#62845c" stroke-width="5.7" stroke-dasharray="1.3 0.9" stroke-linecap="butt"/><path d="M964.5 290.0 Q960.4 280.0 952.9 278.1" stroke="#62845c" stroke-width="1.3"/><path d="M964.5 290.0 Q964.4 280.3 962.0 278.5" stroke="#4a6b47" stroke-width="5.8" stroke-dasharray="1.3 0.9" stroke-linecap="butt"/><path d="M964.5 290.0 Q964.4 280.3 962.0 278.5" stroke="#4a6b47" stroke-width="1.4"/><path d="M964.5 290.0 Q968.1 280.8 974.9 279.1" stroke="#587a54" stroke-width="5.4" stroke-dasharray="1.3 0.9" stroke-linecap="butt"/><path d="M964.5 290.0 Q968.1 280.8 974.9 279.1" stroke="#587a54" stroke-width="1.3"/><path d="M964.5 290.0 Q971.3 275.4 975.6 289.8" stroke="#40603f" stroke-width="4.7" stroke-dasharray="1.3 0.9" stroke-linecap="butt"/><path d="M964.5 290.0 Q971.3 275.4 975.6 289.8" stroke="#40603f" stroke-width="1.1"/><path d="M964.5 290.0 Q974.3 280.7 980.3 295.5" stroke="#62845c" stroke-width="4.9" stroke-dasharray="1.3 0.9" stroke-linecap="butt"/><path d="M964.5 290.0 Q974.3 280.7 980.3 295.5" stroke="#62845c" stroke-width="1.2"/><path d="M964.5 290.0 Q975.6 286.5 982.5 300.1" stroke="#4a6b47" stroke-width="5.8" stroke-dasharray="1.3 0.9" stroke-linecap="butt"/><path d="M964.5 290.0 Q975.6 286.5 982.5 300.1" stroke="#4a6b47" stroke-width="1.4"/><path d="M964.5 290.0 Q954.9 288.1 952.4 302.1" stroke="#587a54" stroke-width="4.7" stroke-dasharray="1.3 0.9" stroke-linecap="butt"/><path d="M964.5 290.0 Q954.9 288.1 952.4 302.1" stroke="#587a54" stroke-width="1.1"/><path d="M964.5 290.0 Q958.5 288.5 958.0 301.5" stroke="#40603f" stroke-width="4.7" stroke-dasharray="1.3 0.9" stroke-linecap="butt"/><path d="M964.5 290.0 Q958.5 288.5 958.0 301.5" stroke="#40603f" stroke-width="1.1"/><path d="M964.5 290.0 Q959.4 288.3 960.5 305.3" stroke="#62845c" stroke-width="4.7" stroke-dasharray="1.3 0.9" stroke-linecap="butt"/><path d="M964.5 290.0 Q959.4 288.3 960.5 305.3" stroke="#62845c" stroke-width="1.1"/><path d="M964.5 290.0 Q972.1 288.5 974.2 299.7" stroke="#587a54" stroke-width="4.7" stroke-dasharray="1.3 0.9" stroke-linecap="butt"/><path d="M964.5 290.0 Q972.1 288.5 974.2 299.7" stroke="#587a54" stroke-width="1.1"/><path d="M964.5 290.0 Q972.3 288.1 972.9 304.9" stroke="#40603f" stroke-width="4.7" stroke-dasharray="1.3 0.9" stroke-linecap="butt"/><path d="M964.5 290.0 Q972.3 288.1 972.9 304.9" stroke="#40603f" stroke-width="1.1"/><path d="M964.5 290.0 Q969.4 288.4 968.3 304.6" stroke="#62845c" stroke-width="4.7" stroke-dasharray="1.3 0.9" stroke-linecap="butt"/><path d="M964.5 290.0 Q969.4 288.4 968.3 304.6" stroke="#62845c" stroke-width="1.1"/></g></g>
 <g><path d="M1219.2 230.0 Q1222.9 251.2 1228.2 272.5 H1230.8 Q1224.9 251.2 1220.8 230.0 Z" fill="#4c423c"/>
  <g fill="none" stroke-linecap="round" opacity="0.85" filter="url(#b05)"><path d="M1219.5 228.0 Q1199.2 221.7 1186.7 237.8" stroke="#5b7a60" stroke-width="7.0" stroke-dasharray="1.3 0.9" stroke-linecap="butt"/><path d="M1219.5 228.0 Q1199.2 221.7 1186.7 237.8" stroke="#5b7a60" stroke-width="1.7"/><path d="M1219.5 228.0 Q1202.8 212.8 1192.5 230.7" stroke="#6d8c70" stroke-width="6.2" stroke-dasharray="1.3 0.9" stroke-linecap="butt"/><path d="M1219.5 228.0 Q1202.8 212.8 1192.5 230.7" stroke="#6d8c70" stroke-width="1.5"/><path d="M1219.5 228.0 Q1205.3 207.1 1196.6 226.2" stroke="#4d6d53" stroke-width="5.8" stroke-dasharray="1.3 0.9" stroke-linecap="butt"/><path d="M1219.5 228.0 Q1205.3 207.1 1196.6 226.2" stroke="#4d6d53" stroke-width="1.4"/><path d="M1219.5 228.0 Q1209.4 204.3 1203.1 222.4" stroke="#7b9a7e" stroke-width="5.9" stroke-dasharray="1.3 0.9" stroke-linecap="butt"/><path d="M1219.5 228.0 Q1209.4 204.3 1203.1 222.4" stroke="#7b9a7e" stroke-width="1.4"/><path d="M1219.5 228.0 Q1215.6 208.6 1206.7 204.9" stroke="#5b7a60" stroke-width="6.5" stroke-dasharray="1.3 0.9" stroke-linecap="butt"/><path d="M1219.5 228.0 Q1215.6 208.6 1206.7 204.9" stroke="#5b7a60" stroke-width="1.5"/><path d="M1219.5 228.0 Q1219.5 210.2 1215.5 206.8" stroke="#6d8c70" stroke-width="5.3" stroke-dasharray="1.3 0.9" stroke-linecap="butt"/><path d="M1219.5 228.0 Q1219.5 210.2 1215.5 206.8" stroke="#6d8c70" stroke-width="1.3"/><path d="M1219.5 228.0 Q1223.9 209.4 1233.6 205.9" stroke="#4d6d53" stroke-width="7.0" stroke-dasharray="1.3 0.9" stroke-linecap="butt"/><path d="M1219.5 228.0 Q1223.9 209.4 1233.6 205.9" stroke="#4d6d53" stroke-width="1.7"/><path d="M1219.5 228.0 Q1230.3 200.7 1236.9 221.0" stroke="#7b9a7e" stroke-width="6.8" stroke-dasharray="1.3 0.9" stroke-linecap="butt"/><path d="M1219.5 228.0 Q1230.3 200.7 1236.9 221.0" stroke="#7b9a7e" stroke-width="1.6"/><path d="M1219.5 228.0 Q1235.0 207.8 1244.5 227.3" stroke="#5b7a60" stroke-width="6.8" stroke-dasharray="1.3 0.9" stroke-linecap="butt"/><path d="M1219.5 228.0 Q1235.0 207.8 1244.5 227.3" stroke="#5b7a60" stroke-width="1.6"/><path d="M1219.5 228.0 Q1237.4 213.4 1248.5 231.8" stroke="#6d8c70" stroke-width="5.7" stroke-dasharray="1.3 0.9" stroke-linecap="butt"/><path d="M1219.5 228.0 Q1237.4 213.4 1248.5 231.8" stroke="#6d8c70" stroke-width="1.4"/><path d="M1219.5 228.0 Q1239.0 221.7 1251.1 237.3" stroke="#4d6d53" stroke-width="6.6" stroke-dasharray="1.3 0.9" stroke-linecap="butt"/><path d="M1219.5 228.0 Q1239.0 221.7 1251.1 237.3" stroke="#4d6d53" stroke-width="1.6"/><path d="M1219.5 228.0 Q1204.9 225.1 1200.9 238.2" stroke="#6d8c70" stroke-width="5.2" stroke-dasharray="1.3 0.9" stroke-linecap="butt"/><path d="M1219.5 228.0 Q1204.9 225.1 1200.9 238.2" stroke="#6d8c70" stroke-width="1.2"/><path d="M1219.5 228.0 Q1204.9 224.4 1203.7 243.3" stroke="#4d6d53" stroke-width="5.2" stroke-dasharray="1.3 0.9" stroke-linecap="butt"/><path d="M1219.5 228.0 Q1204.9 224.4 1203.7 243.3" stroke="#4d6d53" stroke-width="1.2"/><path d="M1219.5 228.0 Q1209.6 224.7 1211.8 244.4" stroke="#7b9a7e" stroke-width="5.2" stroke-dasharray="1.3 0.9" stroke-linecap="butt"/><path d="M1219.5 228.0 Q1209.6 224.7 1211.8 244.4" stroke="#7b9a7e" stroke-width="1.2"/><path d="M1219.5 228.0 Q1235.7 224.8 1240.0 239.3" stroke="#6d8c70" stroke-width="5.2" stroke-dasharray="1.3 0.9" stroke-linecap="butt"/><path d="M1219.5 228.0 Q1235.7 224.8 1240.0 239.3" stroke="#6d8c70" stroke-width="1.2"/><path d="M1219.5 228.0 Q1230.0 225.4 1230.9 239.1" stroke="#4d6d53" stroke-width="5.2" stroke-dasharray="1.3 0.9" stroke-linecap="butt"/><path d="M1219.5 228.0 Q1230.0 225.4 1230.9 239.1" stroke="#4d6d53" stroke-width="1.2"/><path d="M1219.5 228.0 Q1229.1 224.8 1227.0 243.9" stroke="#7b9a7e" stroke-width="5.2" stroke-dasharray="1.3 0.9" stroke-linecap="butt"/><path d="M1219.5 228.0 Q1229.1 224.8 1227.0 243.9" stroke="#7b9a7e" stroke-width="1.2"/></g></g>
 <!-- small far pole -->
 <path d="M700.2 308.5 V339.5" stroke="#3b3b38" stroke-width="1.6"/>
 <!-- flag pole (selected, blue outline) -->
 <g>
  <rect x="672" y="407" width="10" height="167" rx="1" fill="#3b72f4"/>
  <rect x="674.2" y="409" width="5.8" height="163" fill="#86a4f6"/>
  <rect x="673.8" y="233.5" width="8.2" height="175" rx="3" fill="#2a66f2"/>
  <rect x="679" y="243" width="1.3" height="24" fill="#c9d3e6"/>
  <path d="M680 241.5 L789.5 274.8 L680 313.2 Z" fill="#ad3531" stroke="#2f68f0" stroke-width="3.6" stroke-linejoin="round"/>
  <path d="M677.3 572 V500" stroke="#22b8d8" stroke-width="1.6"/>
  <path d="M677.3 493.5 L672.2 507 H682.4 Z" fill="#19b4cf"/>
 </g>
 <!-- transform gizmo -->
 <path d="M665 575.5 L677 569 L690 575.5 L677 582.5 Z" fill="#d9d9d9" opacity=".55"/>
 <path d="M677.3 572.5 L748 581.6" stroke="#ff0a0a" stroke-width="1.8"/>
 <path d="M760.8 583.6 L746.6 575.6 L745.4 587.8 Z" fill="#ff0a0a"/>
 <path d="M677.3 572.5 L659.6 609.5" stroke="#0a0aff" stroke-width="1.8"/>
 <path d="M652.4 609.2 L657 606.6 L664.6 608.6 L664 619.4 L654.2 622.8 Z" fill="#0404f6"/>
 <path d="M701.5 533 L723.6 535.6 L722.6 556 L701.6 553.2 Z" fill="#4a5ccc" opacity=".88"/>
 <path d="M696 589.5 L719 591.5 L715.4 605.8 L692 602.6 Z" fill="#32c632" opacity=".95"/>
 <!-- avatars -->
 <g>
  <path d="M1192.7 428.8 H1211.3 L1195.5 471.5 L1193.6 470 Z" fill="#2a6be0"/>
  <path d="M1269.7 450 H1292 L1273.4 497 H1269.4 Z" fill="#2a6be0"/>
  <path d="M1321 435 H1336 V452 L1324 478.6 L1321.4 477 Z" fill="#2a6be0"/>
  <g fill="#c9d9dc" opacity=".9">
   <ellipse cx="1211.3" cy="383.5" rx="7.6" ry="8.6"/>
   <path d="M1190 396 Q1204 387 1222 396 L1223.5 412 L1227 432 L1222 435 L1217 414 L1216 425.5 H1193.5 L1193 410 L1189.5 433 L1185 430 L1186 408 Z"/>
   <ellipse cx="1294.5" cy="396" rx="9" ry="10"/>
   <path d="M1263 412 Q1286 400 1308 412 L1310 430 L1313 455 L1306 458 L1300 432 L1299 445.6 H1270.5 L1270 430 L1266 455 L1259 452 L1259 428 Z"/>
   <path d="M1316 402 Q1328 394 1340 395 V435.5 H1322 L1321.5 420 L1319 438 L1313 435 L1312.5 418 Z"/>
  </g>
  <path d="M1218 385 H1225 M1299 397.6 H1312" stroke="#3f86d8" stroke-width="1.6"/>
 </g>
 <!-- portal -->
 <clipPath id="pc"><ellipse cx="1298" cy="376.6" rx="63.5" ry="44.6" transform="rotate(-4 1298 376.6)"/></clipPath>
 <g clip-path="url(#pc)"><g transform="rotate(2 1285 380)">
   <rect x="1220" y="320" width="150" height="62" fill="#05050a"/>
   <rect x="1220" y="381" width="150" height="60" fill="#1d43a4"/>
   <rect x="1220" y="378.4" width="150" height="3.6" fill="#39506a"/>
   <path d="M1264.5 356 H1272.5 V361 H1270.8 V366 H1272.5 V371 H1270.8 V379 H1262.6 L1264 371 H1266 V366 H1264 Z" fill="#e4b91e"/>
   <path d="M1247 367 L1243.5 383" stroke="#5a2f8c" stroke-width="1.2"/><ellipse cx="1249" cy="365.5" rx="6" ry="2.6" fill="#45357c"/>
   <path d="M1306 362 L1303 384" stroke="#6a2fb0" stroke-width="1.4"/><ellipse cx="1309" cy="358.5" rx="9" ry="4" fill="#3f3a9c"/>
   <rect x="1311" y="363" width="34" height="16" fill="#8d8f98" opacity=".7"/>
   <rect x="1320" y="369.6" width="24" height="3.4" fill="#fff"/>
   <ellipse cx="1286" cy="412" rx="9" ry="5" fill="#c9d9dc" opacity=".8"/>
 </g></g>
 <ellipse cx="1298" cy="376.6" rx="63.5" ry="44.6" fill="none" stroke="#f23fdc" stroke-width="2.2" transform="rotate(-4 1298 376.6)"/>
 <!-- redraw avatar 2 torso over portal, translucent -->
 <g fill="#c9d9dc" opacity=".78">
  <ellipse cx="1294.5" cy="396" rx="9" ry="10"/>
  <path d="M1263 412 Q1286 400 1308 412 L1310 430 L1313 455 L1306 458 L1300 432 L1299 445.6 H1270.5 L1270 430 L1266 455 L1259 452 L1259 428 Z"/>
  <path d="M1316 402 Q1328 394 1340 395 V435.5 H1322 L1321.5 420 L1319 438 L1313 435 L1312.5 418 Z"/>
 </g>
 <path d="M1299 397.6 H1312" stroke="#3f86d8" stroke-width="1.6"/>
 <!-- orientation gizmo -->
 <g>
  <circle cx="1217" cy="588.2" r="7.8" fill="#b85a32" opacity=".9"/>
  <circle cx="1266.2" cy="583.4" r="7.8" fill="#3d70b4" opacity=".92"/>
  <circle cx="1256" cy="629.4" r="7.8" fill="#2e9a2a" opacity=".9"/>
  <path d="M1256 589 V552" stroke="#0a9a0a" stroke-width="2"/>
  <path d="M1258 590.4 L1294 591.4" stroke="#e01414" stroke-width="2"/>
  <rect x="1252.4" y="585.6" width="8.2" height="8.6" fill="#f4ee0a"/>
  <circle cx="1256" cy="550.2" r="10" fill="#0ab20a"/>
  <circle cx="1294.8" cy="591.5" r="10" fill="#ee0c0c"/>
  <circle cx="1246" cy="596" r="10" fill="#0c46f6"/>
  <g font-family="'Liberation Sans',sans-serif" font-weight="700" font-size="14.5" fill="#fff" text-anchor="middle">
   <text x="1256" y="555.4">Y</text><text x="1294.8" y="596.7">X</text><text x="1246" y="601.2">Z</text>
  </g>
 </g>
 <!--OBJECTS-->
</svg>
<svg style="left:0;top:0" width="340" height="548" viewBox="0 122 340 548">
 <g fill="none" stroke="#fff" stroke-width="1" opacity=".92">
  <rect x="8.5" y="635.5" width="22.5" height="24" rx="3"/><path d="M9 656.8 H30.5"/>
  <rect x="77.5" y="635.5" width="22.5" height="24" rx="3"/><path d="M78 656.8 H99.5"/>
  <rect x="108.5" y="635.5" width="22.5" height="24" rx="3"/><path d="M109 656.8 H130.5"/>
  <rect x="182.5" y="635.5" width="22.5" height="24" rx="3"/><path d="M183 656.8 H204.5"/>
  <rect x="246.5" y="635.5" width="22.5" height="24" rx="3"/><path d="M247 656.8 H268.5"/>
 </g>
 <g font-family="'Liberation Sans',sans-serif" font-weight="700" font-size="9.5" fill="#fff" text-anchor="middle">
  <text x="19.8" y="650">F</text><text x="88.8" y="650">Q</text><text x="119.8" y="650">E</text><text x="193.8" y="650">G</text><text x="257.8" y="649.6" font-size="7.5">Esc</text>
 </g>
</svg>
<div class="t" style="left:38.1px;top:519px;font-size:13.2px;letter-spacing:-0.77px;color:#fff">Focus</div>
<div class="t" style="left:138.4px;top:519px;font-size:13.2px;letter-spacing:-0.45px;color:#fff">Rotate</div>
<div class="t" style="left:211.6px;top:519px;font-size:13.2px;letter-spacing:-0.59px;color:#fff">Grab</div>
<div class="t" style="left:276.0px;top:519px;font-size:13.2px;letter-spacing:-0.55px;color:#fff">Deselect</div>
<!--HINTS-->
</div>
<!-- ============ PROPERTIES PANEL ============ -->
<div class="panel" style="left:1345px;top:87px;width:570px;height:491px"></div>
<div class="abs" style="left:1345px;top:578px;width:570px;height:4px;background:#1f1f1f"></div>
<div class="tab" style="left:1350px;top:89px;width:149px;height:32px"></div>
<div class="hline" style="left:1345px;top:121px;width:570px;background:#3a3a3a"></div>
<svg style="left:0;top:0" width="1915" height="590">
 <!-- tab icon: sliders -->
 <g class="ic" stroke="#ececec" stroke-width="1.3">
  <path d="M1360.6 100 H1371.2 M1376.6 100 H1380.4 M1360.6 111 H1364.6 M1370 111 H1380.4"/>
  <circle cx="1373.9" cy="100" r="2.6"/><circle cx="1367.3" cy="111" r="2.6"/>
 </g>
 <path d="M1476 100 L1485.6 109.6 M1485.6 100 L1476 109.6" stroke="#8e8e8e" stroke-width="1.9" fill="none"/>
 <path d="M1895.2 103.2 V98.9 H1899.5 M1901.1 98.9 H1905.4 V103.2 M1905.4 104.8 V109.1 H1901.1 M1899.5 109.1 H1895.2 V104.8" fill="none" stroke="#8e8e8e" stroke-width="2.4"/>
 <!-- scrollbar -->
 <path d="M1907 131.500 L1910.600 126.500 L1914.200 131.500 Z" fill="#4a4a4a"/>
 <rect x="1907.400" y="137" width="5.600" height="100" rx="2.800" fill="#3f3f3f"/>
 <path d="M1907 569 L1910.600 574 L1914.200 569 Z" fill="#4a4a4a"/>
</svg>
<div class="t" style="left:1388.2px;top:98px;font-size:18px;letter-spacing:-0.22px">Properties</div>
<!-- info box -->
<div class="abs" style="left:1363px;top:141px;width:522px;height:75px;background:#333333;border-radius:7px"></div>
<svg style="left:0;top:0" width="1915" height="590">
 <g class="ic" stroke="#e8e8e8" stroke-width="1.2">
  <path id="cube" d="M1389.600 171.200 L1397.400 175.200 V184.200 L1389.600 188.400 L1381.800 184.200 V175.200 Z M1389.600 179.600 V184.800 M1389.600 179.600 L1385.200 177.200 M1389.600 179.600 L1394 177.200"/>
  <path d="M1382.200 172.600 L1389.600 168.800 L1397 172.600"/>
 </g>
 <!-- lock icon -->
 <rect x="1375.200" y="246.600" width="17.200" height="13" rx="2.200" fill="#f0f0f0"/>
 <path d="M1385.400 246.600 V244.200 a3.400 3.400 0 0 1 6.800 0.400" fill="none" stroke="#f0f0f0" stroke-width="1.500" stroke-linecap="round"/>
 <circle cx="1383.800" cy="253.200" r="1.300" fill="#1f1f1f"/>
</svg>
<div class="t" style="left:1419.0px;top:158px;font-size:15px;letter-spacing:-0.02px">A 3D model abstraction that can include animations. The mesh and</div>
<div class="t" style="left:1419.0px;top:183px;font-size:15px;letter-spacing:-0.03px">animation clips are defined in the file specified by the URL.</div>
<div class="field" style="left:1410px;top:228px;width:475px;height:40px;background:#2a2a2a"></div>
<div class="t" style="left:1425.2px;top:241px;font-size:18px;letter-spacing:-1.05px">Red_Flag</div>
<!-- General header -->
<div class="hdr" style="top:283px"></div>
<div class="hdr" style="top:393px"></div>
<svg style="left:0;top:0" width="1915" height="590">
 <g class="ic" stroke="#e0e0e0" stroke-width="1.300">
  <path d="M1381.200 302.600 L1388.400 309.800 L1395.600 302.600"/>
  <path d="M1381.200 412.800 L1388.400 420 L1395.600 412.800"/>
 </g>
 <g class="ic" stroke="#4a8fd8" stroke-width="1.300">
  <rect x="1414" y="297.800" width="19.400" height="8" rx="1.600"/>
  <rect x="1414" y="308.600" width="8" height="5" rx="1.300"/><rect x="1425.400" y="308.600" width="8" height="5" rx="1.300"/>
  <rect x="1415.200" y="407.600" width="5.200" height="5.200" rx="1"/>
  <path d="M1417.800 412.800 V418 M1420.600 421.200 H1427"/>
  <path d="M1417.800 418.200 L1420.800 421.200 L1417.800 424.200 L1414.800 421.200 Z"/>
  <rect x="1427" y="418.600" width="5.200" height="5.200" rx="1"/>
 </g>
 <g class="ic" stroke="#e8e8e8" stroke-width="1.200"><circle cx="1860" cy="306.200" r="6.800"/>
  <path d="M1857.800 304.400 a2.200 2.200 0 1 1 3.400 1.900 c-0.800 0.500 -1.200 0.900 -1.200 1.900" stroke-width="1.200"/></g>
 <circle cx="1860" cy="310.400" r="0.800" fill="#e8e8e8"/>
 <g fill="#ececec"><circle cx="1860.400" cy="411.200" r="1.500"/><circle cx="1860.400" cy="416.500" r="1.500"/><circle cx="1860.400" cy="421.800" r="1.500"/></g>
</svg>
<div class="t" style="left:1444.9px;top:298px;font-size:18px;letter-spacing:-0.42px">General</div>
<div class="t" style="left:1377.6px;top:352px;font-size:18px;letter-spacing:-0.53px">Enabled</div>
<div class="abs" style="left:1552px;top:350.500px;width:40px;height:20px;border-radius:10px;background:#ff12a8"></div>
<div class="abs" style="left:1575.600px;top:353.600px;width:13.800px;height:13.800px;border-radius:7px;background:#1f1f1f"></div>
<div class="t" style="left:1445.8px;top:408px;font-size:18px;letter-spacing:-0.45px">Transform</div>
<!-- rows -->
<div class="abs" id="proprows" style="left:1345px;top:440px;width:570px;height:138px;overflow:hidden">
<div class="t" style="left:32.6px;top:21px;font-size:18px;letter-spacing:-0.14px">Position</div>
<div class="t" style="left:234.4px;top:21px;font-size:18px;letter-spacing:-0.45px">X:</div>
<div class="field" style="left:263.0px;top:8px;width:68.0px;border-radius:0 5px 5px 0"></div>
<div class="abs" style="left:260.0px;top:8px;width:5px;height:40px;background:#f20d0d;border-radius:1px"></div>
<div class="t" style="left:276.5px;top:21px;font-size:18px;letter-spacing:-0.41px">3.567</div>
<div class="t" style="left:340.2px;top:21px;font-size:18px;letter-spacing:-0.45px">Y:</div>
<div class="field" style="left:366.6px;top:8px;width:68.4px;border-radius:0 5px 5px 0"></div>
<div class="abs" style="left:363.8px;top:8px;width:5px;height:40px;background:#0d8a0d;border-radius:1px"></div>
<div class="t" style="left:381.6px;top:21px;font-size:18px;letter-spacing:-0.46px">17.9</div>
<div class="t" style="left:444.7px;top:21px;font-size:18px;letter-spacing:-0.29px">Z:</div>
<div class="field" style="left:472.0px;top:8px;width:68.0px;border-radius:0 5px 5px 0"></div>
<div class="abs" style="left:469.0px;top:8px;width:5px;height:40px;background:#1a73f0;border-radius:1px"></div>
<div class="abs" style="left:474.0px;top:8px;width:66.0px;height:40px;overflow:hidden"><div class="t" style="left:11.8px;top:13px;font-size:18px;letter-spacing:0.27px">-11.298</div></div>
<div class="t" style="left:32.6px;top:73px;font-size:18px;letter-spacing:-0.03px">Rotation</div>
<div class="t" style="left:234.4px;top:73px;font-size:18px;letter-spacing:-0.45px">X:</div>
<div class="field" style="left:263.0px;top:61px;width:68.0px;border-radius:0 5px 5px 0"></div>
<div class="abs" style="left:260.0px;top:61px;width:5px;height:40px;background:#f20d0d;border-radius:1px"></div>
<div class="t" style="left:276.5px;top:73px;font-size:18px;letter-spacing:1.20px">0</div>
<div class="t" style="left:340.2px;top:73px;font-size:18px;letter-spacing:-0.45px">Y:</div>
<div class="field" style="left:366.6px;top:61px;width:68.4px;border-radius:0 5px 5px 0"></div>
<div class="abs" style="left:363.8px;top:61px;width:5px;height:40px;background:#0d8a0d;border-radius:1px"></div>
<div class="t" style="left:381.6px;top:73px;font-size:18px;letter-spacing:1.20px">0</div>
<div class="t" style="left:444.7px;top:73px;font-size:18px;letter-spacing:-0.29px">Z:</div>
<div class="field" style="left:472.0px;top:61px;width:68.0px;border-radius:0 5px 5px 0"></div>
<div class="abs" style="left:469.0px;top:61px;width:5px;height:40px;background:#1a73f0;border-radius:1px"></div>
<div class="t" style="left:485.8px;top:73px;font-size:18px;letter-spacing:1.20px">0</div>
<div class="t" style="left:32.6px;top:125px;font-size:18px;letter-spacing:-0.74px">Scale</div>
<div class="t" style="left:234.4px;top:125px;font-size:18px;letter-spacing:-0.45px">X:</div>
<div class="field" style="left:263.0px;top:113px;width:68.0px;border-radius:0 5px 5px 0"></div>
<div class="abs" style="left:260.0px;top:113px;width:5px;height:40px;background:#f20d0d;border-radius:1px"></div>
<div class="t" style="left:276.5px;top:125px;font-size:18px;letter-spacing:-0.61px">1.84</div>
<div class="t" style="left:340.2px;top:125px;font-size:18px;letter-spacing:-0.45px">Y:</div>
<div class="field" style="left:366.6px;top:113px;width:68.4px;border-radius:0 5px 5px 0"></div>
<div class="abs" style="left:363.8px;top:113px;width:5px;height:40px;background:#0d8a0d;border-radius:1px"></div>
<div class="t" style="left:381.6px;top:125px;font-size:18px;letter-spacing:-0.61px">1.84</div>
<div class="t" style="left:444.7px;top:125px;font-size:18px;letter-spacing:-0.29px">Z:</div>
<div class="field" style="left:472.0px;top:113px;width:68.0px;border-radius:0 5px 5px 0"></div>
<div class="abs" style="left:469.0px;top:113px;width:5px;height:40px;background:#1a73f0;border-radius:1px"></div>
<div class="t" style="left:485.8px;top:125px;font-size:18px;letter-spacing:-0.61px">1.84</div>
<svg style="left:0;top:0" width="570" height="138"><g fill="none" stroke="#ff12a8" stroke-width="1.700" stroke-linecap="round"><path d="M211.0 129.5 h-3.200 a4.300 4.300 0 0 0 0 8.600 h3.200 M216.0 129.5 h3.200 a4.300 4.300 0 0 1 0 8.600 h-3.200 M209.7 133.8 h7.600"/></g></svg>
</div>
<!-- ============ HIERARCHY PANEL ============ -->
<div class="panel" style="left:1345px;top:588px;width:570px;height:486px"></div>
<div class="tab" style="left:1350px;top:590px;width:143px;height:32px"></div>
<div class="hline" style="left:1345px;top:622px;width:570px;background:#3a3a3a"></div>
<div class="t" style="left:1388.2px;top:599px;font-size:18px;letter-spacing:-0.31px">Hierarchy</div>
<div class="t" style="left:1471.6px;top:635px;font-size:18px;letter-spacing:0.16px;color:#ececec">terrainglb</div>
<div class="abs" style="left:1845px;top:630.5px;width:44px;height:25px;border-radius:12.500px;background:#f5a30a"></div>
<div class="t" style="left:1874.8px;top:635px;font-size:15px;letter-spacing:-0.99px;font-weight:700;color:#fff">1</div>
<div class="t" style="left:1471.6px;top:670px;font-size:18px;letter-spacing:0.30px;color:#ececec">flagglb</div>
<div class="t" style="left:1471.6px;top:705px;font-size:18px;letter-spacing:-0.20px;color:#ececec">Palmglb</div>
<div class="abs" style="left:1845px;top:700.5px;width:44px;height:25px;border-radius:12.500px;background:#f5a30a"></div>
<div class="t" style="left:1874.8px;top:705px;font-size:15px;letter-spacing:-0.99px;font-weight:700;color:#fff">1</div>
<div class="t" style="left:1471.6px;top:740px;font-size:18px;letter-spacing:-0.48px;color:#ececec">Simple_Water</div>
<div class="t" style="left:1471.6px;top:775px;font-size:18px;letter-spacing:-0.54px;color:#ececec">095_hdrmaps_com_freejpg</div>
<div class="t" style="left:1471.6px;top:810px;font-size:18px;letter-spacing:-0.33px;color:#ececec">star_1glb</div>
<div class="t" style="left:1441.4px;top:845px;font-size:18px;letter-spacing:-0.78px;color:#ececec">Spawn_Poin</div>
<div class="t" style="left:1441.4px;top:880px;font-size:18px;letter-spacing:0.04px;color:#ececec">starpng</div>
<div class="t" style="left:1441.4px;top:915px;font-size:18px;letter-spacing:-0.36px;color:#ececec">starpng_1</div>
<div class="t" style="left:1441.4px;top:950px;font-size:18px;letter-spacing:0.43px;color:#ececec">portalglb</div>
<div class="t" style="left:1441.4px;top:985px;font-size:18px;letter-spacing:-0.43px;color:#ececec">Silicon_Bechgif</div>
<div class="t" style="left:1441.4px;top:1020px;font-size:18px;letter-spacing:-0.40px;color:#ececec">Skybox</div>
<div class="t" style="left:1441.4px;top:1055px;font-size:18px;letter-spacing:-0.02px;color:#ececec">audiovukmp3</div>
<svg style="left:0;top:0" width="1915" height="1074"><g class="ic" stroke="#e2e2e2" stroke-width="1.250"><defs>
 <g id="i-model"><path d="M-8.600 -3.600 L0 -7.200 L8.600 -3.600 V3.800 L0 8.400 L-8.600 3.800 Z M0 0.600 V5.600 M0 0.600 L-4.800 -2 M0 0.600 L4.800 -2 M-8.200 -6.800 L0 -10.400 L8.200 -6.800"/></g>
 <g id="i-image"><rect x="-8.600" y="-8.400" width="17.200" height="16.800" rx="2.600"/><circle cx="3" cy="-3.300" r="1.500"/><path d="M-7 6.600 L-0.300 0.800 L7.400 7"/></g>
 <g id="i-water"><path d="M-10.3 -3.9 L-7.7 -6.5 L-5.1 -3.9 L-2.5 -6.5 L0.1 -3.9 L2.7 -6.5 L5.3 -3.9 L7.9 -6.5 L10.5 -3.9 M-10.3 2.2 L-7.7 -0.4 L-5.1 2.2 L-2.5 -0.4 L0.1 2.2 L2.7 -0.4 L5.3 2.2 L7.9 -0.4 L10.5 2.2 M-10.3 8.4 L-7.7 5.8 L-5.1 8.4 L-2.5 5.8 L0.1 8.4 L2.7 5.8 L5.3 8.4 L7.9 5.8 L10.5 8.4"/></g>
 <g id="i-cubes"><path d="M-10.400 -0.800 L-3.400 -3.600 L3.800 -0.800 V6 L-3.400 9 L-10.400 6 Z M-10.400 -0.800 L-3.400 2 L3.800 -0.800 M-3.400 2 V9"/><path d="M-2.600 -6.800 L3 -9.400 L10 -6.400 V3.200 L5.200 5.200 M-2.600 -6.800 L3 -4.200 L10 -6.400 M-2.600 -6.800 V-4.200"/></g>
 <g id="i-sky"><path d="M-6.200 8.400 a3.600 3.600 0 0 1 -0.600 -7.200 a5 5 0 0 1 9.600 -1.200 a4.200 4.200 0 0 1 3.400 8.400 Z"/><path d="M-6.800 -1.200 a3.800 3.800 0 0 1 6 -4.400 M-9.800 -3.400 L-8.200 -3 M-8.800 -7.600 L-7.600 -6.400 M-4.600 -9.600 L-4.200 -8 M-0.400 -8.800 L-1.200 -7.400 M-10 0.800 L-8.600 0.200"/></g>
 <g id="i-audio"><path d="M-9.800 -3.400 H-5.800 L1.800 -9.600 V9.600 L-5.800 3.400 H-9.800 Z"/><path d="M4.600 -3.400 a5.400 5.400 0 0 1 0 6.800 M7.200 -6.600 a10 10 0 0 1 0 13.200"/></g>
</defs>
<use href="#i-model" x="1449.6" y="642.9"/>
<g stroke="#fff" stroke-width="1.500"><path d="M1860 636.5 L1866.600 648.0 H1853.400 Z"/><path d="M1860 640.6 V644.0" stroke-width="1.400"/></g><circle cx="1860" cy="646.2" r="0.900" fill="#fff" stroke="none"/>
<use href="#i-model" x="1449.6" y="677.9"/>
<use href="#i-model" x="1449.6" y="712.9"/>
<g stroke="#fff" stroke-width="1.500"><path d="M1860 706.5 L1866.600 718.0 H1853.400 Z"/><path d="M1860 710.6 V714.0" stroke-width="1.400"/></g><circle cx="1860" cy="716.2" r="0.900" fill="#fff" stroke="none"/>
<use href="#i-water" x="1449.6" y="747.5"/>
<use href="#i-image" x="1449.6" y="782.5"/>
<use href="#i-model" x="1449.6" y="817.9"/>
<use href="#i-cubes" x="1419.6" y="852.5"/>
<use href="#i-image" x="1419.6" y="887.5"/>
<use href="#i-image" x="1419.6" y="922.5"/>
<use href="#i-model" x="1419.6" y="957.9"/>
<use href="#i-image" x="1419.6" y="992.5"/>
<use href="#i-sky" x="1419.6" y="1027.5"/>
<use href="#i-audio" x="1419.6" y="1062.5"/>
<path d="M1388.200 848 L1393.400 853.200 L1388.200 858.400" stroke="#b8b8b8" stroke-width="1.300"/>
<g stroke="#ececec" stroke-width="1.300"><rect x="1362" y="599" width="16.600" height="16" rx="3"/><path d="M1362 604.400 H1378.600 M1362 609.800 H1378.600 M1367.400 599 V615"/></g>
<path d="M1471 602.200 L1480.600 611.800 M1480.600 602.200 L1471 611.800" stroke="#8e8e8e" stroke-width="1.9"/>
<path d="M1895.2 604.2 V599.9 H1899.5 M1901.1 599.9 H1905.4 V604.2 M1905.4 605.8 V610.1 H1901.1 M1899.5 610.1 H1895.2 V605.8" stroke="#8e8e8e" stroke-width="2.4" stroke-linecap="butt" stroke-linejoin="miter"/>
<path d="M1907 632.500 L1910.600 627.500 L1914.200 632.500 Z" fill="#4a4a4a" stroke="none"/><rect x="1907.400" y="744" width="5.600" height="277" rx="2.800" fill="#3f3f3f" stroke="none"/></g></svg>
<!-- ============ RESOURCES PANEL ============ -->
<div class="panel" style="left:0;top:680px;width:1335px;height:394px;border-radius:0 6px 0 0"></div>
<div class="tab" style="left:2px;top:682px;width:145px;height:32px"></div>
<div class="hline" style="left:0;top:714px;width:1335px;background:#3a3a3a"></div>
<div class="t" style="left:38.0px;top:690px;font-size:18px;letter-spacing:-0.86px">Resources</div>
<div class="t" style="left:16.9px;top:732px;font-size:18px;letter-spacing:-0.59px;color:#d2d2d2">Assets</div>
<div class="t" style="left:86.1px;top:732px;font-size:18px;letter-spacing:-0.42px;font-weight:700;color:#ffffff">Integrations</div>
<div class="t" style="left:203.5px;top:732px;font-size:18px;letter-spacing:-0.35px;color:#d2d2d2">Bundles</div>
<div class="abs" style="left:85px;top:757.300px;width:101px;height:3px;background:#ff12a8;border-radius:1.500px"></div>
<div class="hline" style="left:0;top:760px;width:1335px;background:#3a3a3a"></div>
<div class="vline" style="left:215.4px;top:761px;height:313px;width:1.4px;background:#46494f"></div>
<div class="abs" style="left:0;top:786px;width:215px;height:32px;background:#e85cb6"></div>
<div class="t" style="left:58.6px;top:794px;font-size:18px;letter-spacing:-0.39px;color:#e9dbe4">Sketchfab</div>
<div class="t" style="left:273.8px;top:778px;font-size:18px;letter-spacing:-0.48px;font-weight:700;color:#f0f0f0">Filter</div>
<div class="field" style="left:370px;top:766px;width:235px;height:40px;background:#282828;border-radius:6px"></div>
<div class="t" style="left:413.4px;top:778px;font-size:18px;letter-spacing:-0.05px">red flag</div>
<div class="hline" style="left:216.8px;top:811px;width:1118px;background:#3a3a3a"></div>
<svg style="left:0;top:0" width="1335" height="1074"><g class="ic" stroke="#ececec" stroke-width="1.300">
 <path d="M22.600 688.400 L31.400 692.800 V702.600 L22.600 707 L13.800 702.600 V692.800 Z M13.800 692.800 L22.600 697.200 L31.400 692.800 M22.600 697.200 V707" stroke-width="1.800"/>
 <path d="M125.600 693.200 L134.600 702.200 M134.600 693.200 L125.600 702.200" stroke="#8e8e8e" stroke-width="1.9"/>
 <path d="M1311.9 696.3 V692.0 H1316.2 M1317.8 692.0 H1322.1 V696.3 M1322.1 697.9 V702.2 H1317.8 M1316.2 702.2 H1311.9 V697.9" stroke="#8e8e8e" stroke-width="2.4" stroke-linecap="butt" stroke-linejoin="miter"/>
 <path d="M246.200 779.600 H263 M248.600 785.400 H260.600 M251 791.200 H258.200" stroke="#dcdcdc" stroke-width="1.400"/>
 <path d="M322.600 785 L326.800 789.200 L331 785" stroke="#cfcfcf" stroke-width="1.300"/>
 <circle cx="392" cy="783.600" r="6" stroke="#cfcfcf" stroke-width="1.400"/><path d="M396.400 788 L401.400 793" stroke="#cfcfcf" stroke-width="1.400"/>
 <path d="M29.600 795.200 a1.600 1.600 0 0 1 1.600 -1.600 h5.600 l2.600 2.400 h8.600 a1.600 1.600 0 0 1 1.600 1.600 v10.600 a1.600 1.600 0 0 1 -1.600 1.600 h-16.800 a1.600 1.600 0 0 1 -1.600 -1.600 z" fill="#ffffff" stroke="#ffffff" stroke-width="0.800"/>
 <path d="M1325 842 L1328.600 836.600 L1332.200 842 Z" fill="#4a4a4a" stroke="none"/><rect x="1325.600" y="846.800" width="6" height="46" rx="3" fill="#3f3f3f" stroke="none"/><path d="M1325 1021 L1328.600 1026.400 L1332.200 1021 Z" fill="#4a4a4a" stroke="none"/>
</g></svg>
<div class="card" style="left:241px;top:834px;background:#2a2a2a"><div class="thumb"><svg style="left:0;top:0" width="124" height="123" viewBox="0 0 124 123"><rect width="124" height="123" fill="#dddddd"/>
<path d="M94.500 22 h-7 v3 h-6 v3 h-7 v3 h-7 v3 h-7 v3 h-7 v3 h-7 v3 h-7 v3 h-7 v3 h-7 v3.500 h6 v3 h7 v3 h7 v3 h7 v3 h7 v3 h7 v3 h7 v3 h7 v3 h6 v3 h6 z" fill="#cf2222"/>
<path d="M24.500 50 H93 L92.200 74 h-6 v-3 h-7 v-3 h-7 v-3 h-7 v-3 h-7 v-3 h-7 v-3 h-7 v-3 h-7 v-3 h-6 z" fill="#b81d1d"/>
<path d="M94.400 15.600 H102.600 L97 100.200 H89.400 Z" fill="#555"/><path d="M98 15.600 H100.600 L95 100.200 H92.600 Z" fill="#6a6a6a"/></svg></div></div>
<div class="t" style="left:247.2px;top:973px;font-size:18.5px;letter-spacing:-0.82px;color:#e8e8e8">Bandeira (Red...</div>
<div class="card" style="left:394px;top:834px;background:#2a2a2a"><div class="thumb"><svg style="left:0;top:0" width="124" height="123" viewBox="0 0 124 123"><rect width="124" height="123" fill="#dedede"/>
<g>
<path d="M88 50 L106 47.500 L107.500 51 L104 52 L103 57 L100 57 L100.500 52.500 L89 54 Z" fill="#d9384c"/>
<path d="M3 80 C4 72 10 68 20 66 C28 60 36 55 46 51 C52 47 60 46 66 48 L78 53 C88 55 98 60 102 66 C106 72 105 80 102 86 C98 94 90 99 80 101 C64 105 40 105 22 102 C8 100 2 90 3 80 Z" fill="#d22626"/>
<path d="M40 58 C44 49 52 45 60 46 C64 46 70 50 76 54 C68 55 58 59 50 64 Z" fill="#2b2228"/>
<path d="M46 52 C50 46 58 44.500 64 46" fill="none" stroke="#17141a" stroke-width="2.200"/>
<path d="M58 56 L70 50 L80 53 L74 58 Z" fill="#3b3350"/>
<path d="M56 54 L66 50 L70 52 L60 57 Z" fill="#d9b23a"/>
<path d="M7 82 L44 90 L60 78 L56 93 L40 99 L12 94 Z" fill="#18222c"/>
<path d="M12 88 L40 94 L54 86" fill="none" stroke="#2d6a78" stroke-width="1.600"/>
<path d="M9 79 L42 85.500 L58 74" fill="none" stroke="#dfb031" stroke-width="2.600"/>
<path d="M44 86 L60 74 L63 81 L50 91 Z" fill="#9fc0ea"/><path d="M50 84 L58 78" stroke="#1b2a4a" stroke-width="1.600"/>
<ellipse cx="77" cy="92" rx="7.500" ry="12" fill="#2a1d22"/><ellipse cx="77" cy="92" rx="4.200" ry="8" fill="#dca02e"/><ellipse cx="77" cy="92" rx="2" ry="4" fill="#c73528"/>
<path d="M70 68 C80 62 92 62 100 67 L98 75 C90 70 80 72 72 78 Z" fill="#e55a2b"/>
<path d="M84 76 C90 72 96 72 100 75 L97 88 C93 92 89 95 85 96 C88 90 88 82 84 76 Z" fill="#b81f27"/>
<path d="M8 100 L56 106 L92 99 L90 103 L52 110 L12 106 Z" fill="#b61f25"/>
<path d="M16 108 L50 112 L64 110 L50 108 Z" fill="#d84a4a"/>
</g></svg></div></div>
<div class="t" style="left:432.9px;top:973px;font-size:18.5px;letter-spacing:-0.18px;color:#e8e8e8">red flag</div>
<div class="card" style="left:547px;top:834px;background:#2a2a2a"><div class="thumb"><svg style="left:0;top:0" width="124" height="123" viewBox="0 0 124 123"><rect width="124" height="123" fill="#dcdcdc"/>
<path d="M0 12 C30 16 70 30 100 62 C112 76 120 92 124 104 V123 H70 C50 90 25 60 0 34 Z" fill="#fdfdfd"/>
<path d="M0 34 C25 60 50 90 70 123 H50 C36 98 18 72 0 52 Z" fill="#c9c9c9" opacity=".7"/>
<path d="M8 96 L40 92 L60 123 H30 Z" fill="#f4f4f4"/><path d="M0 52 L8 96 L0 98 Z" fill="#e9e9e9"/>
<path d="M30 18 C60 26 96 44 118 84 L110 102 C96 66 70 40 36 24 Z" fill="#bdbdbd" opacity=".75"/>
<path d="M60 30 C84 40 108 62 122 94 L118 84 C100 52 82 40 60 30 Z" fill="#9e9e9e" opacity=".6"/>
<ellipse cx="63.500" cy="73.500" rx="23" ry="22.500" fill="#f23a22" transform="rotate(20 63.500 73.500)"/>
<ellipse cx="58" cy="66" rx="14" ry="12" fill="#fb4a2a" opacity=".6"/></svg></div></div>
<div class="t" style="left:553.2px;top:973px;font-size:18.5px;letter-spacing:-0.46px;color:#e8e8e8">Japan flag wit...</div>
<div class="card" style="left:700px;top:834px;background:#3d3d3d"><div class="thumb"><svg style="left:0;top:0" width="124" height="123" viewBox="0 0 124 123"><rect width="124" height="123" fill="#020504"/>
<path d="M47.600 13.700 L49.800 110" stroke="#e4e4e4" stroke-width="1.500"/>
<path d="M48 14.600 L69 19.800 L49 35.400 Z" fill="#f2402f"/></svg></div></div>
<div class="t" style="left:735.2px;top:973px;font-size:18.5px;letter-spacing:-0.94px;color:#ffffff">Red Flag</div>
<div class="card" style="left:853px;top:834px;background:#2a2a2a"><div class="thumb"><svg style="left:0;top:0" width="124" height="123" viewBox="0 0 124 123"><defs><radialGradient id="t5" cx=".5" cy=".6" r=".75"><stop offset="0" stop-color="#d2d3d9"/><stop offset=".55" stop-color="#b4b8c5"/><stop offset="1" stop-color="#8d93a6"/></radialGradient></defs>
<rect width="124" height="123" fill="url(#t5)"/>
<path d="M28 84 L40 78 L56 90 L48 96 L30 90 Z" fill="#6f7280" opacity=".8"/>
<path d="M28 98.500 H96" stroke="#3a3c40" stroke-width="2.200"/>
<path d="M57.200 15.600 L60 16 L62 60 L58 64 Z" fill="#1d1d1d"/>
<path d="M57 16 L48 30 L44 46 L31.500 56 L46.500 72.500 L54 64 L60 60 L58.500 40 Z" fill="#cf2323"/>
<path d="M50 24 l4 -1 l1 4 l-4 1 z" fill="#e6b02a"/>
<ellipse cx="69" cy="54" rx="6.500" ry="6" fill="#4f5c3c"/><path d="M65 56 h8 v5 h-7 z" fill="#d9b48c"/>
<path d="M60 62 L74 60 L76 78 L70 84 L60 82 L56 74 Z" fill="#55623f"/>
<path d="M68 74 H89 V77.500 H74 L72 82 H68 Z" fill="#1e1e20"/>
<path d="M58 80 L48 92 L40 96 L42 100 L52 98 L62 88 Z M66 82 L70 96 L64 98 L64 100 L74 100 L74 84 Z" fill="#23241f"/></svg></div></div>
<div class="t" style="left:859.2px;top:973px;font-size:18.5px;letter-spacing:-0.68px;color:#e8e8e8">Red Army Sol...</div>
<div class="card" style="left:1006px;top:834px;background:#2a2a2a"><div class="thumb"><svg style="left:0;top:0" width="124" height="123" viewBox="0 0 124 123"><defs><linearGradient id="t6" x1="0" y1="0" x2="1" y2="1"><stop offset="0" stop-color="#a3a9ab"/><stop offset="1" stop-color="#c6cacb"/></linearGradient></defs>
<rect width="124" height="123" fill="url(#t6)"/>
<path d="M59 84 H76 V123 H59 Z" fill="#aa8e6d"/><path d="M70 84 H76 V123 H70 Z" fill="#8f7557"/>
<path d="M34 18 C60 16 90 20 100 26 C106 30 107 38 107 46 V78 L60 88 L16 80 V40 C16 28 24 19 34 18 Z" fill="#39393b"/>
<path d="M34 18 C60 16 90 20 100 26 C104 29 106 34 106.500 40 C90 30 60 26 40 28 Z" fill="#55565a"/>
<path d="M16 80 V42 C16 26 28 19 38 20 C50 21 55 32 55 44 V86 Z" fill="#7b7d7f"/>
<path d="M18 78 V42 C18 30 28 22 37 23 C47 24 52 33 52 44 V83 Z" fill="none" stroke="#5c5e60" stroke-width="1.200"/>
<rect x="26" y="28" width="9" height="12" rx="1.500" fill="#2a2a2c"/>
<path d="M89 11 H97 V20 H93 V56 H88 Z" fill="#d6232a"/><path d="M76 30 L89 24 V36 Z" fill="#a51d22"/>
<path d="M16 80 L60 88 L107 78 V81 L60 91.500 L16 83 Z" fill="#242426"/></svg></div></div>
<div class="t" style="left:1012.2px;top:973px;font-size:18.5px;letter-spacing:-0.63px;color:#e8e8e8">Home US Mail...</div>
<div class="card" style="left:1159px;top:834px;background:#2a2a2a"><div class="thumb"><svg style="left:0;top:0" width="124" height="123" viewBox="0 0 124 123"><defs><linearGradient id="t7" x1="0" y1="0" x2="0" y2="1"><stop offset="0" stop-color="#6c6c6c"/><stop offset=".3" stop-color="#7f7f7f"/><stop offset=".62" stop-color="#a2a2a2"/><stop offset=".75" stop-color="#7a7a7a"/><stop offset="1" stop-color="#595959"/></linearGradient></defs>
<rect width="124" height="123" fill="url(#t7)"/>
<g opacity=".16" fill="none" stroke="#fff"><circle cx="62" cy="62" r="21" stroke-width="3"/><path d="M62 48 L74 54 V68 L62 75 L50 68 V54 Z" fill="#fff" stroke="none"/></g>
<path d="M58.600 16 V88" stroke="#f4f4f4" stroke-width="1.400"/><circle cx="58.600" cy="16" r="1.800" fill="#fff"/><circle cx="58.600" cy="88.400" r="1.800" fill="#fff"/>
<path d="M60 17.500 C70 20 82 30 94 37 C104 42 114 45 124 49 V54 C110 50 100 48 92 44 C80 38 70 33 60 33.800 Z" fill="#fafafa"/>
<path d="M60 17.500 C70 20 82 30 94 37 C104 42 114 45 124 49 V51 C112 47.500 102 46 93 41.500 C82 34 70 26 60 26 Z" fill="#d11212"/></svg></div></div>
<div class="t" style="left:1169.9px;top:973px;font-size:18.5px;letter-spacing:-0.33px;color:#e8e8e8">Castle-flag-red</div>
<div class="abs" style="left:216px;top:1011px;width:1119px;height:19px;overflow:hidden">
<div class="card" style="left:25px;top:0;height:40px"><div class="thumb" style="background:#e9e9e9"></div><div class="abs" style="left:7px;top:16px;width:124px;height:3px;background:linear-gradient(90deg,#5f86b6 0,#5f86b6 40%,#c9584f 40%,#c9584f 100%)"></div></div>
<div class="card" style="left:178px;top:0;height:40px"><div class="thumb" style="background:#e4e4e4"></div></div>
<div class="card" style="left:331px;top:0;height:40px"><div class="thumb" style="background:#303030"></div><div class="abs" style="left:7px;top:5px;width:124px;height:20px;background:radial-gradient(ellipse at 50% 100%,#6a6a6a 0,#2c2c2c 70%)"></div></div>
<div class="card" style="left:484px;top:0;height:40px"><div class="thumb" style="background:#8b8e93"></div><div class="abs" style="left:7px;top:5px;width:124px;height:20px;background:linear-gradient(90deg,#7d8086,#a0a3a8 70%,#85888d)"></div></div>
<div class="card" style="left:637px;top:0;height:40px"><div class="thumb" style="background:#e6e6e6"></div><div class="abs" style="left:50px;top:12px;width:12px;height:5px;border-radius:3px;background:#fafafa;box-shadow:0 0 2px #aaa"></div></div>
<div class="card" style="left:790px;top:0;height:40px"><div class="thumb" style="background:#e6e6e6"></div><div class="abs" style="left:30px;top:13px;width:80px;height:10px;background:#2a2a2c;transform:skewY(-3deg)"></div></div>
<div class="card" style="left:943px;top:0;height:40px"><div class="thumb" style="background:#e9e9e9"></div></div>
</div>
<div class="abs" style="left:216px;top:1030px;width:1119px;height:44px;background:#2a2a2a"></div>
<div class="t" style="left:236.2px;top:1047px;font-size:18px;letter-spacing:0.40px">All</div>
<div class="t" style="left:1248.6px;top:1047px;font-size:18px;letter-spacing:-0.18px">24 items</div>
<div class="abs" style="left:725px;top:795px;width:86px;height:35px;background:#2a2a2a;border-radius:6px;box-shadow:0 2px 6px rgba(0,0,0,.35)"></div>
<div class="t" style="left:739.3px;top:804px;font-size:15.5px;letter-spacing:-0.64px">Red Flag</div>
</body>
</html>
